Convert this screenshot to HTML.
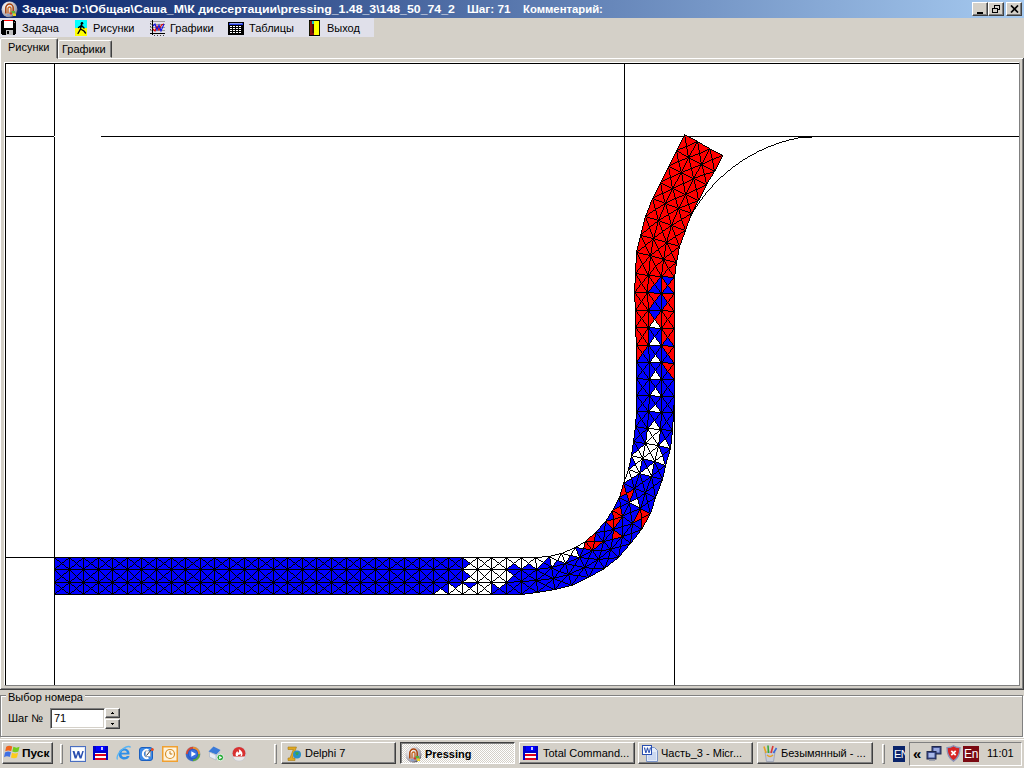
<!DOCTYPE html>
<html><head><meta charset="utf-8"><title>Pressing</title>
<style>
*{box-sizing:border-box;margin:0;padding:0}
html,body{width:1024px;height:768px;overflow:hidden;background:#d4d0c8}
body{position:relative;font-family:"Liberation Sans",sans-serif;font-size:11px;color:#000}
.abs{position:absolute}
.t{position:absolute;white-space:nowrap;line-height:13px}
#title{left:0;top:0;width:1024px;height:18px;background:linear-gradient(90deg,#0a246a 0%,#a6caf0 100%)}
#title .t{color:#fff;font-weight:bold;font-size:11px;top:3px}
.cb{position:absolute;top:2px;height:14px;width:16px;background:#d4d0c8;border:1px solid;border-color:#fff #404040 #404040 #fff;box-shadow:inset -1px -1px 0 #808080}
#toolbar{left:0;top:18px;width:374px;height:19px;background:#e0e0ea}
.tab{position:absolute;background:#d4d0c8;border:1px solid;border-color:#fff #404040 transparent #fff;border-radius:2px 2px 0 0}
.raised{border:1px solid;border-color:#fff #404040 #404040 #fff;box-shadow:inset -1px -1px 0 #808080,inset 1px 1px 0 #d4d0c8;background:#d4d0c8}
.tb{position:absolute;top:743px;height:22px;border:1px solid;border-color:#fff #404040 #404040 #fff;box-shadow:inset -1px -1px 0 #808080;background:#d4d0c8}
.tb .t{top:4px;font-size:11px}
.sep{position:absolute;top:745px;width:2px;height:18px;border-left:1px solid #808080;border-right:1px solid #fff}
</style></head><body>
<!-- title bar -->
<div id="title" class="abs">
 <svg class="abs" style="left:1px;top:1px" width="17" height="17" viewBox="0 0 17 17"><defs><radialGradient id="sg" cx="0.35" cy="0.3" r="0.75"><stop offset="0" stop-color="#ffffff"/><stop offset="0.45" stop-color="#d6d4d8"/><stop offset="0.85" stop-color="#9a98a4"/><stop offset="1" stop-color="#3a3a48"/></radialGradient></defs><circle cx="8.5" cy="8.5" r="8" fill="url(#sg)"/><path d="M4.8 12.5V6.800a3.700 3.700 0 0 1 7.400 0V12" fill="none" stroke="#a8420c" stroke-width="1.500"/><path d="M7 12.500V7.500a1.500 1.500 0 0 1 3 0V12" fill="none" stroke="#c8641c" stroke-width="1.300"/><rect x="10.500" y="10" width="3.500" height="2.500" fill="#58b038"/><rect x="12" y="12.500" width="3" height="2.500" fill="#e8d020"/><rect x="8.500" y="11.500" width="2.500" height="2" fill="#d03828"/><rect x="6" y="13" width="3" height="2" fill="#8aa0c8"/></svg>
 <div class="t" style="left:22px;transform-origin:0 0;transform:scaleX(1.118)">Задача: D:\Общая\Саша_М\К диссертации\pressing_1.48_3\148_50_74_2</div>
 <div class="t" style="left:467px;transform-origin:0 0;transform:scaleX(1.07)">Шаг: 71</div>
 <div class="t" style="left:523px;transform-origin:0 0;transform:scaleX(1.027)">Комментарий:</div>
 <div class="cb" style="left:972px"><div class="abs" style="left:4px;top:9px;width:6px;height:2px;background:#000"></div></div>
 <div class="cb" style="left:988px"><svg class="abs" style="left:2px;top:1px" width="10" height="10" viewBox="0 0 10 10" shape-rendering="crispEdges"><path d="M3.5 1.5h5v4h-2M3 1h6M3.5 1.5v2" fill="none" stroke="#000" stroke-width="1"/><path d="M1.5 4.5h5v4h-5zM1 4h6" fill="none" stroke="#000" stroke-width="1"/></svg></div>
 <div class="cb" style="left:1006px"><svg class="abs" style="left:3px;top:2px" width="9" height="8" viewBox="0 0 9 8"><path d="M1 0.5L8 7.5M8 0.5L1 7.5" stroke="#000" stroke-width="1.7"/></svg></div>
</div>
<!-- toolbar -->
<div id="toolbar" class="abs"></div>
<svg class="abs" style="left:1px;top:20px" width="16" height="16" viewBox="0 0 16 16" shape-rendering="crispEdges"><path d="M1 0h13v1h1v13h-1v1H1v-1H0V1h1z" fill="#000"/><rect x="3" y="0" width="9" height="1" fill="#f00"/><rect x="13" y="2" width="1" height="1" fill="#808080"/><rect x="3" y="1" width="9" height="7" fill="#fff"/><rect x="5" y="10" width="7" height="5" fill="#c0c0c0"/><rect x="6" y="11" width="2" height="3" fill="#000"/></svg>
<div class="t" style="left:22px;top:22px">Задача</div>
<svg class="abs" style="left:75px;top:20px" width="12" height="16" viewBox="0 0 12 16"><rect width="12" height="8" fill="#0ff"/><rect y="8" width="12" height="8" fill="#ff0"/><circle cx="7" cy="3.2" r="1.3" fill="#000"/><path d="M6.5 4.5L5.5 9 3 13.5M5.5 9L9 11l1.5 2M6.3 5.5L3.5 7.5M6.5 5.5L9 8" stroke="#000" stroke-width="1.4" fill="none" stroke-linecap="round"/></svg>
<div class="t" style="left:93px;top:22px">Рисунки</div>
<svg class="abs" style="left:149px;top:20px" width="17" height="17" viewBox="0 0 17 17"><g shape-rendering="crispEdges"><path d="M1 1.500h15M1 4.500h15M1 7.500h15M1 10.500h15" stroke="#9a9a9a" stroke-width="1" fill="none"/><path d="M3.500 0v15M1 13.500h15" stroke="#000" stroke-width="1" fill="none"/><path d="M5.500 15v1M8.500 15v1M11.500 15v1M14.500 15v1M1 3.500h1M1 6.500h1M1 9.500h1" stroke="#404040" stroke-width="1" fill="none"/></g><path d="M4 9l2 2 2-5 2 4 2.500-5 2.500-1" stroke="#e00000" fill="none" stroke-width="1.100"/><path d="M4 6l2-2 2 6 2-5 2 6 3-7" stroke="#1010e0" fill="none" stroke-width="1.100"/></svg>
<div class="t" style="left:170px;top:22px">Графики</div>
<svg class="abs" style="left:228px;top:22px" width="16" height="13" viewBox="0 0 16 13" shape-rendering="crispEdges"><rect width="16" height="13" fill="#000"/><rect x="1" y="1" width="14" height="2" fill="#2038e0"/><rect x="2" y="1" width="12" height="1" fill="#8898f0"/><rect x="2" y="4" width="2" height="1" fill="#fff"/><rect x="5" y="4" width="2" height="1" fill="#fff"/><rect x="8" y="4" width="2" height="1" fill="#fff"/><rect x="11" y="4" width="2" height="1" fill="#fff"/><rect x="2" y="6" width="2" height="1" fill="#fff"/><rect x="5" y="6" width="2" height="1" fill="#fff"/><rect x="8" y="6" width="2" height="1" fill="#fff"/><rect x="11" y="6" width="2" height="1" fill="#fff"/><rect x="2" y="8" width="2" height="1" fill="#fff"/><rect x="5" y="8" width="2" height="1" fill="#fff"/><rect x="8" y="8" width="2" height="1" fill="#fff"/><rect x="11" y="8" width="2" height="1" fill="#fff"/><rect x="2" y="10" width="2" height="1" fill="#fff"/><rect x="5" y="10" width="2" height="1" fill="#fff"/><rect x="8" y="10" width="2" height="1" fill="#fff"/><rect x="11" y="10" width="2" height="1" fill="#fff"/></svg>
<div class="t" style="left:249px;top:22px">Таблицы</div>
<svg class="abs" style="left:309px;top:20px" width="11" height="16" viewBox="0 0 12 16" preserveAspectRatio="none" shape-rendering="crispEdges"><rect x="0.5" y="0.5" width="11" height="15" fill="#ff0" stroke="#000"/><rect x="1" y="1" width="4" height="14" fill="#8a1010"/><rect x="3" y="1" width="2" height="3" fill="#20c0c0"/><path d="M4.5 4v9" stroke="#000" fill="none"/></svg>
<div class="t" style="left:327px;top:22px">Выход</div>
<!-- tabs -->
<div class="abs" style="left:0;top:58px;width:1023px;height:1px;background:#fff"></div>
<div class="tab" style="left:0px;top:38px;width:58px;height:21px;z-index:2;border-right-color:#404040;box-shadow:inset -1px 0 0 #808080"></div>
<div class="tab" style="left:58px;top:40px;width:54px;height:18px;box-shadow:inset -1px 0 0 #808080"></div>
<div class="t" style="left:8px;top:41px;z-index:3">Рисунки</div>
<div class="t" style="left:62px;top:43px;z-index:3">Графики</div>
<!-- tab page borders -->
<div class="abs" style="left:0;top:56px;width:1px;height:633px;background:#fff;z-index:4"></div>
<div class="abs" style="left:1022px;top:59px;width:1px;height:630px;background:#808080"></div>
<div class="abs" style="left:1023px;top:58px;width:1px;height:632px;background:#404040"></div>
<div class="abs" style="left:0;top:688px;width:1023px;height:1px;background:#808080"></div>
<div class="abs" style="left:0;top:689px;width:1024px;height:1px;background:#404040"></div>
<!-- canvas -->
<div class="abs" style="left:4px;top:62px;width:1016px;height:624px;background:#fff;border:1px solid;border-color:#fff #808080 #808080 #fff"></div>
<svg class="abs" style="left:0;top:0" width="1024" height="768" viewBox="0 0 1024 768" shape-rendering="crispEdges">
<rect x="5" y="63" width="1014" height="622" fill="#fff"/>
<rect x="5" y="63" width="1014" height="1" fill="#000"/><rect x="5" y="63" width="1" height="622" fill="#000"/>
<g stroke="#000" stroke-width="1" fill="none">
<path d="M54.5 64V136M54.5 137V685"/>
<path d="M6 136.5H54"/>
<path d="M101 136.5H1019"/>
<path d="M6 557.5H55"/>
<path d="M624.5 64V484"/>
<path d="M674.5 259V685"/>
</g>
<path fill="none" stroke="#000" stroke-width="1" d="M804 136.5h4m-10 1h14m-18 1h4m-9 1h5m-8 1h3m-7 1h4m-7 1h3m-6 1h3m-5 1h2m-5 1h3m-6 1h3m-5 1h2m-4 1h2m-4 1h2m-5 1h3m-5 1h2m-3 1h1m-3 1h2m-4 1h2m-4 1h2m-4 1h2m-3 1h1m-3 1h2m-4 1h2m-3 1h1m-3 1h2m-3 1h1m-2 1h1m-3 1h2m-3 1h1m-3 1h2m-3 1h1m-2 1h1m-2 1h1m-3 1h2m-3 1h1m-2 1h1m-2 1h1m-2 1h1m-2 1h1m-3 1h2m-3 1h1m-2 1h1m-2 1h1m-2 1h1m-2 1h1m-2 1h1m-2 1h1m-2 1h1m-2 1h1m-1 1h1m-2 1h1m-2 1h1m-2 1h1m-2 1h1m-2 1h1m-2 1h1m-2 1h1m-1 1h1m-2 1h1m-2 1h1m-2 1h1m-1 1h1m-2 1h1m-2 1h1m-2 1h1m-1 1h1m-2 1h1m-2 1h1m-1 1h1m-2 1h1m-2 1h1m-1 1h1m-2 1h1m-2 1h1m-1 1h1m-2 1h1m-1 1h1m-2 1h1m-1 1h1m-2 1h1m-2 1h1m-1 1h1m-2 1h1m-1 1h1m-2 1h1m-1 1h1m-2 1h1m-1 1h1m-2 1h1m-1 1h1m-2 1h1m-1 1h1m-1 1h1m-2 1h1m-1 1h1m-2 1h1m-1 1h1m-2 1h1m-1 1h1m-1 1h1m-2 1h1m-1 1h1m-1 1h1m-2 1h1m-1 1h1m-1 1h1m-2 1h1m-1 1h1m-1 1h1m-2 1h1m-1 1h1m-1 1h1m-2 1h1m-1 1h1m-1 1h1m-1 1h1m-2 1h1m-1 1h1m-1 1h1m-1 1h1m-2 1h1m-1 1h1m-1 1h1"/>
<g stroke="#000" stroke-width="1" stroke-linejoin="bevel">
<path fill="#0000ff" stroke="none" d="M54.5 557.5L69.5 557.5L61.5 563.5ZM54.5 569.5L69.5 569.5L61.5 563.5ZM54.5 557.5L54.5 569.5L61.5 563.5ZM69.5 557.5L69.5 569.5L61.5 563.5ZM54.5 569.5L69.5 569.5L61.5 576.5ZM54.5 582.5L69.5 582.5L61.5 576.5ZM54.5 569.5L54.5 582.5L61.5 576.5ZM69.5 569.5L69.5 582.5L61.5 576.5ZM54.5 582.5L69.5 582.5L61.5 588.5ZM54.5 594.5L69.5 594.5L61.5 588.5ZM54.5 582.5L54.5 594.5L61.5 588.5ZM69.5 582.5L69.5 594.5L61.5 588.5ZM69.5 557.5L83.5 557.5L76.5 563.5ZM69.5 569.5L83.5 569.5L76.5 563.5ZM69.5 557.5L69.5 569.5L76.5 563.5ZM83.5 557.5L83.5 569.5L76.5 563.5ZM69.5 569.5L83.5 569.5L76.5 576.5ZM69.5 582.5L83.5 582.5L76.5 576.5ZM69.5 569.5L69.5 582.5L76.5 576.5ZM83.5 569.5L83.5 582.5L76.5 576.5ZM69.5 582.5L83.5 582.5L76.5 588.5ZM69.5 594.5L83.5 594.5L76.5 588.5ZM69.5 582.5L69.5 594.5L76.5 588.5ZM83.5 582.5L83.5 594.5L76.5 588.5ZM83.5 557.5L98.5 557.5L90.5 563.5ZM83.5 569.5L98.5 569.5L90.5 563.5ZM83.5 557.5L83.5 569.5L90.5 563.5ZM98.5 557.5L98.5 569.5L90.5 563.5ZM83.5 569.5L98.5 569.5L90.5 576.5ZM83.5 582.5L98.5 582.5L90.5 576.5ZM83.5 569.5L83.5 582.5L90.5 576.5ZM98.5 569.5L98.5 582.5L90.5 576.5ZM83.5 582.5L98.5 582.5L90.5 588.5ZM83.5 594.5L98.5 594.5L90.5 588.5ZM83.5 582.5L83.5 594.5L90.5 588.5ZM98.5 582.5L98.5 594.5L90.5 588.5ZM98.5 557.5L112.5 557.5L105.5 563.5ZM98.5 569.5L112.5 569.5L105.5 563.5ZM98.5 557.5L98.5 569.5L105.5 563.5ZM112.5 557.5L112.5 569.5L105.5 563.5ZM98.5 569.5L112.5 569.5L105.5 576.5ZM98.5 582.5L112.5 582.5L105.5 576.5ZM98.5 569.5L98.5 582.5L105.5 576.5ZM112.5 569.5L112.5 582.5L105.5 576.5ZM98.5 582.5L112.5 582.5L105.5 588.5ZM98.5 594.5L112.5 594.5L105.5 588.5ZM98.5 582.5L98.5 594.5L105.5 588.5ZM112.5 582.5L112.5 594.5L105.5 588.5ZM112.5 557.5L127.5 557.5L120.5 563.5ZM112.5 569.5L127.5 569.5L120.5 563.5ZM112.5 557.5L112.5 569.5L120.5 563.5ZM127.5 557.5L127.5 569.5L120.5 563.5ZM112.5 569.5L127.5 569.5L120.5 576.5ZM112.5 582.5L127.5 582.5L120.5 576.5ZM112.5 569.5L112.5 582.5L120.5 576.5ZM127.5 569.5L127.5 582.5L120.5 576.5ZM112.5 582.5L127.5 582.5L120.5 588.5ZM112.5 594.5L127.5 594.5L120.5 588.5ZM112.5 582.5L112.5 594.5L120.5 588.5ZM127.5 582.5L127.5 594.5L120.5 588.5ZM127.5 557.5L141.5 557.5L134.5 563.5ZM127.5 569.5L141.5 569.5L134.5 563.5ZM127.5 557.5L127.5 569.5L134.5 563.5ZM141.5 557.5L141.5 569.5L134.5 563.5ZM127.5 569.5L141.5 569.5L134.5 576.5ZM127.5 582.5L141.5 582.5L134.5 576.5ZM127.5 569.5L127.5 582.5L134.5 576.5ZM141.5 569.5L141.5 582.5L134.5 576.5ZM127.5 582.5L141.5 582.5L134.5 588.5ZM127.5 594.5L141.5 594.5L134.5 588.5ZM127.5 582.5L127.5 594.5L134.5 588.5ZM141.5 582.5L141.5 594.5L134.5 588.5ZM141.5 557.5L156.5 557.5L149.5 563.5ZM141.5 569.5L156.5 569.5L149.5 563.5ZM141.5 557.5L141.5 569.5L149.5 563.5ZM156.5 557.5L156.5 569.5L149.5 563.5ZM141.5 569.5L156.5 569.5L149.5 576.5ZM141.5 582.5L156.5 582.5L149.5 576.5ZM141.5 569.5L141.5 582.5L149.5 576.5ZM156.5 569.5L156.5 582.5L149.5 576.5ZM141.5 582.5L156.5 582.5L149.5 588.5ZM141.5 594.5L156.5 594.5L149.5 588.5ZM141.5 582.5L141.5 594.5L149.5 588.5ZM156.5 582.5L156.5 594.5L149.5 588.5ZM156.5 557.5L171.5 557.5L163.5 563.5ZM156.5 569.5L171.5 569.5L163.5 563.5ZM156.5 557.5L156.5 569.5L163.5 563.5ZM171.5 557.5L171.5 569.5L163.5 563.5ZM156.5 569.5L171.5 569.5L163.5 576.5ZM156.5 582.5L171.5 582.5L163.5 576.5ZM156.5 569.5L156.5 582.5L163.5 576.5ZM171.5 569.5L171.5 582.5L163.5 576.5ZM156.5 582.5L171.5 582.5L163.5 588.5ZM156.5 594.5L171.5 594.5L163.5 588.5ZM156.5 582.5L156.5 594.5L163.5 588.5ZM171.5 582.5L171.5 594.5L163.5 588.5ZM171.5 557.5L185.5 557.5L178.5 563.5ZM171.5 569.5L185.5 569.5L178.5 563.5ZM171.5 557.5L171.5 569.5L178.5 563.5ZM185.5 557.5L185.5 569.5L178.5 563.5ZM171.5 569.5L185.5 569.5L178.5 576.5ZM171.5 582.5L185.5 582.5L178.5 576.5ZM171.5 569.5L171.5 582.5L178.5 576.5ZM185.5 569.5L185.5 582.5L178.5 576.5ZM171.5 582.5L185.5 582.5L178.5 588.5ZM171.5 594.5L185.5 594.5L178.5 588.5ZM171.5 582.5L171.5 594.5L178.5 588.5ZM185.5 582.5L185.5 594.5L178.5 588.5ZM185.5 557.5L200.5 557.5L193.5 563.5ZM185.5 569.5L200.5 569.5L193.5 563.5ZM185.5 557.5L185.5 569.5L193.5 563.5ZM200.5 557.5L200.5 569.5L193.5 563.5ZM185.5 569.5L200.5 569.5L193.5 576.5ZM185.5 582.5L200.5 582.5L193.5 576.5ZM185.5 569.5L185.5 582.5L193.5 576.5ZM200.5 569.5L200.5 582.5L193.5 576.5ZM185.5 582.5L200.5 582.5L193.5 588.5ZM185.5 594.5L200.5 594.5L193.5 588.5ZM185.5 582.5L185.5 594.5L193.5 588.5ZM200.5 582.5L200.5 594.5L193.5 588.5ZM200.5 557.5L214.5 557.5L207.5 563.5ZM200.5 569.5L214.5 569.5L207.5 563.5ZM200.5 557.5L200.5 569.5L207.5 563.5ZM214.5 557.5L214.5 569.5L207.5 563.5ZM200.5 569.5L214.5 569.5L207.5 576.5ZM200.5 582.5L214.5 582.5L207.5 576.5ZM200.5 569.5L200.5 582.5L207.5 576.5ZM214.5 569.5L214.5 582.5L207.5 576.5ZM200.5 582.5L214.5 582.5L207.5 588.5ZM200.5 594.5L214.5 594.5L207.5 588.5ZM200.5 582.5L200.5 594.5L207.5 588.5ZM214.5 582.5L214.5 594.5L207.5 588.5ZM214.5 557.5L229.5 557.5L222.5 563.5ZM214.5 569.5L229.5 569.5L222.5 563.5ZM214.5 557.5L214.5 569.5L222.5 563.5ZM229.5 557.5L229.5 569.5L222.5 563.5ZM214.5 569.5L229.5 569.5L222.5 576.5ZM214.5 582.5L229.5 582.5L222.5 576.5ZM214.5 569.5L214.5 582.5L222.5 576.5ZM229.5 569.5L229.5 582.5L222.5 576.5ZM214.5 582.5L229.5 582.5L222.5 588.5ZM214.5 594.5L229.5 594.5L222.5 588.5ZM214.5 582.5L214.5 594.5L222.5 588.5ZM229.5 582.5L229.5 594.5L222.5 588.5ZM229.5 557.5L244.5 557.5L236.5 563.5ZM229.5 569.5L244.5 569.5L236.5 563.5ZM229.5 557.5L229.5 569.5L236.5 563.5ZM244.5 557.5L244.5 569.5L236.5 563.5ZM229.5 569.5L244.5 569.5L236.5 576.5ZM229.5 582.5L244.5 582.5L236.5 576.5ZM229.5 569.5L229.5 582.5L236.5 576.5ZM244.5 569.5L244.5 582.5L236.5 576.5ZM229.5 582.5L244.5 582.5L236.5 588.5ZM229.5 594.5L244.5 594.5L236.5 588.5ZM229.5 582.5L229.5 594.5L236.5 588.5ZM244.5 582.5L244.5 594.5L236.5 588.5ZM244.5 557.5L258.5 557.5L251.5 563.5ZM244.5 569.5L258.5 569.5L251.5 563.5ZM244.5 557.5L244.5 569.5L251.5 563.5ZM258.5 557.5L258.5 569.5L251.5 563.5ZM244.5 569.5L258.5 569.5L251.5 576.5ZM244.5 582.5L258.5 582.5L251.5 576.5ZM244.5 569.5L244.5 582.5L251.5 576.5ZM258.5 569.5L258.5 582.5L251.5 576.5ZM244.5 582.5L258.5 582.5L251.5 588.5ZM244.5 594.5L258.5 594.5L251.5 588.5ZM244.5 582.5L244.5 594.5L251.5 588.5ZM258.5 582.5L258.5 594.5L251.5 588.5ZM258.5 557.5L273.5 557.5L265.5 563.5ZM258.5 569.5L273.5 569.5L265.5 563.5ZM258.5 557.5L258.5 569.5L265.5 563.5ZM273.5 557.5L273.5 569.5L265.5 563.5ZM258.5 569.5L273.5 569.5L265.5 576.5ZM258.5 582.5L273.5 582.5L265.5 576.5ZM258.5 569.5L258.5 582.5L265.5 576.5ZM273.5 569.5L273.5 582.5L265.5 576.5ZM258.5 582.5L273.5 582.5L265.5 588.5ZM258.5 594.5L273.5 594.5L265.5 588.5ZM258.5 582.5L258.5 594.5L265.5 588.5ZM273.5 582.5L273.5 594.5L265.5 588.5ZM273.5 557.5L287.5 557.5L280.5 563.5ZM273.5 569.5L287.5 569.5L280.5 563.5ZM273.5 557.5L273.5 569.5L280.5 563.5ZM287.5 557.5L287.5 569.5L280.5 563.5ZM273.5 569.5L287.5 569.5L280.5 576.5ZM273.5 582.5L287.5 582.5L280.5 576.5ZM273.5 569.5L273.5 582.5L280.5 576.5ZM287.5 569.5L287.5 582.5L280.5 576.5ZM273.5 582.5L287.5 582.5L280.5 588.5ZM273.5 594.5L287.5 594.5L280.5 588.5ZM273.5 582.5L273.5 594.5L280.5 588.5ZM287.5 582.5L287.5 594.5L280.5 588.5ZM287.5 557.5L302.5 557.5L295.5 563.5ZM287.5 569.5L302.5 569.5L295.5 563.5ZM287.5 557.5L287.5 569.5L295.5 563.5ZM302.5 557.5L302.5 569.5L295.5 563.5ZM287.5 569.5L302.5 569.5L295.5 576.5ZM287.5 582.5L302.5 582.5L295.5 576.5ZM287.5 569.5L287.5 582.5L295.5 576.5ZM302.5 569.5L302.5 582.5L295.5 576.5ZM287.5 582.5L302.5 582.5L295.5 588.5ZM287.5 594.5L302.5 594.5L295.5 588.5ZM287.5 582.5L287.5 594.5L295.5 588.5ZM302.5 582.5L302.5 594.5L295.5 588.5ZM302.5 557.5L316.5 557.5L309.5 563.5ZM302.5 569.5L316.5 569.5L309.5 563.5ZM302.5 557.5L302.5 569.5L309.5 563.5ZM316.5 557.5L316.5 569.5L309.5 563.5ZM302.5 569.5L316.5 569.5L309.5 576.5ZM302.5 582.5L316.5 582.5L309.5 576.5ZM302.5 569.5L302.5 582.5L309.5 576.5ZM316.5 569.5L316.5 582.5L309.5 576.5ZM302.5 582.5L316.5 582.5L309.5 588.5ZM302.5 594.5L316.5 594.5L309.5 588.5ZM302.5 582.5L302.5 594.5L309.5 588.5ZM316.5 582.5L316.5 594.5L309.5 588.5ZM316.5 557.5L331.5 557.5L324.5 563.5ZM316.5 569.5L331.5 569.5L324.5 563.5ZM316.5 557.5L316.5 569.5L324.5 563.5ZM331.5 557.5L331.5 569.5L324.5 563.5ZM316.5 569.5L331.5 569.5L324.5 576.5ZM316.5 582.5L331.5 582.5L324.5 576.5ZM316.5 569.5L316.5 582.5L324.5 576.5ZM331.5 569.5L331.5 582.5L324.5 576.5ZM316.5 582.5L331.5 582.5L324.5 588.5ZM316.5 594.5L331.5 594.5L324.5 588.5ZM316.5 582.5L316.5 594.5L324.5 588.5ZM331.5 582.5L331.5 594.5L324.5 588.5ZM331.5 557.5L346.5 557.5L338.5 563.5ZM331.5 569.5L346.5 569.5L338.5 563.5ZM331.5 557.5L331.5 569.5L338.5 563.5ZM346.5 557.5L346.5 569.5L338.5 563.5ZM331.5 569.5L346.5 569.5L338.5 576.5ZM331.5 582.5L346.5 582.5L338.5 576.5ZM331.5 569.5L331.5 582.5L338.5 576.5ZM346.5 569.5L346.5 582.5L338.5 576.5ZM331.5 582.5L346.5 582.5L338.5 588.5ZM331.5 594.5L346.5 594.5L338.5 588.5ZM331.5 582.5L331.5 594.5L338.5 588.5ZM346.5 582.5L346.5 594.5L338.5 588.5ZM346.5 557.5L360.5 557.5L353.5 563.5ZM346.5 569.5L360.5 569.5L353.5 563.5ZM346.5 557.5L346.5 569.5L353.5 563.5ZM360.5 557.5L360.5 569.5L353.5 563.5ZM346.5 569.5L360.5 569.5L353.5 576.5ZM346.5 582.5L360.5 582.5L353.5 576.5ZM346.5 569.5L346.5 582.5L353.5 576.5ZM360.5 569.5L360.5 582.5L353.5 576.5ZM346.5 582.5L360.5 582.5L353.5 588.5ZM346.5 594.5L360.5 594.5L353.5 588.5ZM346.5 582.5L346.5 594.5L353.5 588.5ZM360.5 582.5L360.5 594.5L353.5 588.5ZM360.5 557.5L375.5 557.5L367.5 563.5ZM360.5 569.5L375.5 569.5L367.5 563.5ZM360.5 557.5L360.5 569.5L367.5 563.5ZM375.5 557.5L375.5 569.5L367.5 563.5ZM360.5 569.5L375.5 569.5L367.5 576.5ZM360.5 582.5L375.5 582.5L367.5 576.5ZM360.5 569.5L360.5 582.5L367.5 576.5ZM375.5 569.5L375.5 582.5L367.5 576.5ZM360.5 582.5L375.5 582.5L367.5 588.5ZM360.5 594.5L375.5 594.5L367.5 588.5ZM360.5 582.5L360.5 594.5L367.5 588.5ZM375.5 582.5L375.5 594.5L367.5 588.5ZM375.5 557.5L389.5 557.5L382.5 563.5ZM375.5 569.5L389.5 569.5L382.5 563.5ZM375.5 557.5L375.5 569.5L382.5 563.5ZM389.5 557.5L389.5 569.5L382.5 563.5ZM375.5 569.5L389.5 569.5L382.5 576.5ZM375.5 582.5L389.5 582.5L382.5 576.5ZM375.5 569.5L375.5 582.5L382.5 576.5ZM389.5 569.5L389.5 582.5L382.5 576.5ZM375.5 582.5L389.5 582.5L382.5 588.5ZM375.5 594.5L389.5 594.5L382.5 588.5ZM375.5 582.5L375.5 594.5L382.5 588.5ZM389.5 582.5L389.5 594.5L382.5 588.5ZM389.5 557.5L404.5 557.5L397.5 563.5ZM389.5 569.5L404.5 569.5L397.5 563.5ZM389.5 557.5L389.5 569.5L397.5 563.5ZM404.5 557.5L404.5 569.5L397.5 563.5ZM389.5 569.5L404.5 569.5L397.5 576.5ZM389.5 582.5L404.5 582.5L397.5 576.5ZM389.5 569.5L389.5 582.5L397.5 576.5ZM404.5 569.5L404.5 582.5L397.5 576.5ZM389.5 582.5L404.5 582.5L397.5 588.5ZM389.5 594.5L404.5 594.5L397.5 588.5ZM389.5 582.5L389.5 594.5L397.5 588.5ZM404.5 582.5L404.5 594.5L397.5 588.5ZM404.5 557.5L419.5 557.5L411.5 563.5ZM404.5 569.5L419.5 569.5L411.5 563.5ZM404.5 557.5L404.5 569.5L411.5 563.5ZM419.5 557.5L419.5 569.5L411.5 563.5ZM404.5 569.5L419.5 569.5L411.5 576.5ZM404.5 582.5L419.5 582.5L411.5 576.5ZM404.5 569.5L404.5 582.5L411.5 576.5ZM419.5 569.5L419.5 582.5L411.5 576.5ZM404.5 582.5L419.5 582.5L411.5 588.5ZM404.5 594.5L419.5 594.5L411.5 588.5ZM404.5 582.5L404.5 594.5L411.5 588.5ZM419.5 582.5L419.5 594.5L411.5 588.5ZM419.5 557.5L433.5 557.5L426.5 563.5ZM419.5 569.5L433.5 569.5L426.5 563.5ZM419.5 557.5L419.5 569.5L426.5 563.5ZM433.5 557.5L433.5 569.5L426.5 563.5ZM419.5 569.5L433.5 569.5L426.5 576.5ZM419.5 582.5L433.5 582.5L426.5 576.5ZM419.5 569.5L419.5 582.5L426.5 576.5ZM433.5 569.5L433.5 582.5L426.5 576.5ZM419.5 582.5L433.5 582.5L426.5 588.5ZM419.5 594.5L433.5 594.5L426.5 588.5ZM419.5 582.5L419.5 594.5L426.5 588.5ZM433.5 582.5L433.5 594.5L426.5 588.5ZM433.5 557.5L448.5 557.5L440.5 563.5ZM433.5 569.5L448.5 569.5L440.5 563.5ZM433.5 557.5L433.5 569.5L440.5 563.5ZM448.5 557.5L448.5 569.5L440.5 563.5ZM433.5 569.5L448.5 569.5L440.5 576.5ZM433.5 582.5L448.5 582.5L440.5 576.5ZM433.5 569.5L433.5 582.5L440.5 576.5ZM448.5 569.5L448.5 582.5L440.5 576.5ZM433.5 582.5L448.5 582.5L440.5 588.5ZM433.5 582.5L433.5 594.5L440.5 588.5ZM448.5 582.5L448.5 594.5L440.5 588.5ZM448.5 557.5L462.5 557.5L455.5 563.5ZM448.5 569.5L462.5 569.5L455.5 563.5ZM448.5 557.5L448.5 569.5L455.5 563.5ZM462.5 557.5L462.5 569.5L455.5 563.5ZM448.5 569.5L462.5 569.5L455.5 576.5ZM448.5 582.5L462.5 582.5L455.5 576.5ZM448.5 569.5L448.5 582.5L455.5 576.5ZM462.5 569.5L462.5 582.5L455.5 576.5ZM448.5 582.5L462.5 582.5L455.5 588.5ZM462.5 557.5L462.5 569.5L470.5 563.5ZM462.5 569.5L462.5 582.5L470.5 576.5ZM462.5 582.5L477.5 582.5L470.5 588.5ZM491.5 594.5L506.5 594.5L499.5 588.5ZM491.5 582.5L491.5 594.5L499.5 588.5ZM506.5 582.5L506.5 594.5L499.5 588.5ZM506.5 569.5L521.5 569.5L513.5 563.5ZM506.5 569.5L521.5 569.5L513.5 575.5ZM506.5 582.5L521.5 581.5L513.5 575.5ZM521.5 569.5L521.5 581.5L513.5 575.5ZM506.5 582.5L521.5 581.5L513.5 588.5ZM506.5 594.5L521.5 594.5L513.5 588.5ZM506.5 582.5L506.5 594.5L513.5 588.5ZM521.5 581.5L521.5 594.5L513.5 588.5ZM521.5 569.5L536.5 569.5L528.5 563.5ZM521.5 569.5L536.5 569.5L528.5 575.5ZM521.5 581.5L536.5 580.5L528.5 575.5ZM521.5 569.5L521.5 581.5L528.5 575.5ZM536.5 569.5L536.5 580.5L528.5 575.5ZM521.5 581.5L536.5 580.5L529.5 587.5ZM521.5 594.5L537.5 592.5L529.5 587.5ZM521.5 581.5L521.5 594.5L529.5 587.5ZM536.5 580.5L537.5 592.5L529.5 587.5ZM536.5 569.5L551.5 567.5L543.5 562.5ZM549.5 556.5L551.5 567.5L543.5 562.5ZM536.5 569.5L551.5 567.5L544.5 574.5ZM536.5 580.5L553.5 578.5L544.5 574.5ZM536.5 569.5L536.5 580.5L544.5 574.5ZM551.5 567.5L553.5 578.5L544.5 574.5ZM536.5 580.5L553.5 578.5L545.5 585.5ZM537.5 592.5L554.5 589.5L545.5 585.5ZM536.5 580.5L537.5 592.5L545.5 585.5ZM553.5 578.5L554.5 589.5L545.5 585.5ZM551.5 567.5L565.5 563.5L557.5 560.5ZM551.5 567.5L565.5 563.5L559.5 571.5ZM553.5 578.5L568.5 574.5L559.5 571.5ZM551.5 567.5L553.5 578.5L559.5 571.5ZM565.5 563.5L568.5 574.5L559.5 571.5ZM553.5 578.5L568.5 574.5L561.5 581.5ZM554.5 589.5L571.5 585.5L561.5 581.5ZM553.5 578.5L554.5 589.5L561.5 581.5ZM568.5 574.5L571.5 585.5L561.5 581.5ZM565.5 563.5L579.5 557.5L570.5 555.5ZM565.5 563.5L579.5 557.5L574.5 565.5ZM568.5 574.5L584.5 567.5L574.5 565.5ZM565.5 563.5L568.5 574.5L574.5 565.5ZM579.5 557.5L584.5 567.5L574.5 565.5ZM568.5 574.5L584.5 567.5L578.5 575.5ZM571.5 585.5L588.5 577.5L578.5 575.5ZM568.5 574.5L571.5 585.5L578.5 575.5ZM584.5 567.5L588.5 577.5L578.5 575.5ZM579.5 557.5L592.5 550.5L583.5 548.5ZM575.5 547.5L579.5 557.5L583.5 548.5ZM579.5 557.5L592.5 550.5L588.5 558.5ZM584.5 567.5L598.5 559.5L588.5 558.5ZM579.5 557.5L584.5 567.5L588.5 558.5ZM592.5 550.5L598.5 559.5L588.5 558.5ZM584.5 567.5L598.5 559.5L593.5 568.5ZM588.5 577.5L604.5 568.5L593.5 568.5ZM584.5 567.5L588.5 577.5L593.5 568.5ZM598.5 559.5L604.5 568.5L593.5 568.5ZM595.5 532.5L603.5 541.5L594.5 541.5ZM592.5 550.5L603.5 541.5L601.5 550.5ZM598.5 559.5L610.5 549.5L601.5 550.5ZM592.5 550.5L598.5 559.5L601.5 550.5ZM603.5 541.5L610.5 549.5L601.5 550.5ZM598.5 559.5L610.5 549.5L608.5 558.5ZM604.5 568.5L618.5 557.5L608.5 558.5ZM598.5 559.5L604.5 568.5L608.5 558.5ZM610.5 549.5L618.5 557.5L608.5 558.5ZM595.5 532.5L605.5 521.5L604.5 531.5ZM603.5 541.5L613.5 529.5L604.5 531.5ZM595.5 532.5L603.5 541.5L604.5 531.5ZM605.5 521.5L613.5 529.5L604.5 531.5ZM603.5 541.5L613.5 529.5L612.5 539.5ZM610.5 549.5L622.5 536.5L612.5 539.5ZM603.5 541.5L610.5 549.5L612.5 539.5ZM610.5 549.5L622.5 536.5L620.5 546.5ZM618.5 557.5L630.5 543.5L620.5 546.5ZM610.5 549.5L618.5 557.5L620.5 546.5ZM622.5 536.5L630.5 543.5L620.5 546.5ZM605.5 521.5L612.5 510.5L613.5 519.5ZM613.5 529.5L622.5 516.5L622.5 526.5ZM622.5 536.5L632.5 523.5L622.5 526.5ZM613.5 529.5L622.5 536.5L622.5 526.5ZM622.5 516.5L632.5 523.5L622.5 526.5ZM622.5 536.5L632.5 523.5L631.5 533.5ZM630.5 543.5L641.5 529.5L631.5 533.5ZM622.5 536.5L630.5 543.5L631.5 533.5ZM632.5 523.5L641.5 529.5L631.5 533.5ZM612.5 510.5L619.5 497.5L620.5 506.5ZM622.5 516.5L629.5 502.5L620.5 506.5ZM619.5 497.5L629.5 502.5L620.5 506.5ZM622.5 516.5L629.5 502.5L630.5 512.5ZM632.5 523.5L640.5 508.5L630.5 512.5ZM622.5 516.5L632.5 523.5L630.5 512.5ZM629.5 502.5L640.5 508.5L630.5 512.5ZM632.5 523.5L641.5 529.5L641.5 518.5ZM619.5 497.5L629.5 502.5L626.5 493.5ZM623.5 483.5L634.5 488.5L626.5 493.5ZM629.5 502.5L634.5 488.5L637.5 498.5ZM640.5 508.5L645.5 492.5L637.5 498.5ZM634.5 488.5L645.5 492.5L637.5 498.5ZM640.5 508.5L645.5 492.5L647.5 502.5ZM650.5 513.5L655.5 497.5L647.5 502.5ZM640.5 508.5L650.5 513.5L647.5 502.5ZM645.5 492.5L655.5 497.5L647.5 502.5ZM634.5 488.5L639.5 473.5L631.5 478.5ZM623.5 483.5L634.5 488.5L631.5 478.5ZM634.5 488.5L639.5 473.5L642.5 482.5ZM645.5 492.5L651.5 476.5L642.5 482.5ZM634.5 488.5L645.5 492.5L642.5 482.5ZM639.5 473.5L651.5 476.5L642.5 482.5ZM645.5 492.5L651.5 476.5L653.5 486.5ZM655.5 497.5L662.5 479.5L653.5 486.5ZM645.5 492.5L655.5 497.5L653.5 486.5ZM651.5 476.5L662.5 479.5L653.5 486.5ZM628.5 469.5L631.5 455.5L635.5 464.5ZM639.5 473.5L642.5 458.5L647.5 467.5ZM642.5 458.5L654.5 461.5L647.5 467.5ZM651.5 476.5L654.5 461.5L658.5 470.5ZM662.5 479.5L665.5 465.5L658.5 470.5ZM651.5 476.5L662.5 479.5L658.5 470.5ZM654.5 461.5L665.5 465.5L658.5 470.5ZM631.5 455.5L633.5 441.5L638.5 449.5ZM633.5 441.5L645.5 443.5L638.5 449.5ZM665.5 465.5L670.5 448.5L662.5 455.5ZM658.5 445.5L670.5 448.5L662.5 455.5ZM633.5 441.5L635.5 426.5L640.5 434.5ZM645.5 443.5L647.5 428.5L640.5 434.5ZM633.5 441.5L645.5 443.5L640.5 434.5ZM635.5 426.5L647.5 428.5L640.5 434.5ZM658.5 445.5L660.5 429.5L665.5 438.5ZM670.5 448.5L672.5 430.5L665.5 438.5ZM660.5 429.5L672.5 430.5L665.5 438.5ZM635.5 426.5L636.5 411.5L641.5 419.5ZM647.5 428.5L648.5 411.5L641.5 419.5ZM635.5 426.5L647.5 428.5L641.5 419.5ZM636.5 411.5L648.5 411.5L641.5 419.5ZM647.5 428.5L648.5 411.5L654.5 420.5ZM660.5 429.5L661.5 412.5L654.5 420.5ZM648.5 411.5L661.5 412.5L654.5 420.5ZM660.5 429.5L661.5 412.5L666.5 421.5ZM672.5 430.5L673.5 412.5L666.5 421.5ZM660.5 429.5L672.5 430.5L666.5 421.5ZM661.5 412.5L673.5 412.5L666.5 421.5ZM636.5 411.5L636.5 395.5L642.5 403.5ZM648.5 411.5L649.5 395.5L642.5 403.5ZM636.5 411.5L648.5 411.5L642.5 403.5ZM636.5 395.5L649.5 395.5L642.5 403.5ZM648.5 411.5L649.5 395.5L655.5 404.5ZM661.5 412.5L661.5 396.5L655.5 404.5ZM649.5 395.5L661.5 396.5L655.5 404.5ZM661.5 412.5L661.5 396.5L667.5 404.5ZM673.5 412.5L674.5 396.5L667.5 404.5ZM661.5 412.5L673.5 412.5L667.5 404.5ZM661.5 396.5L674.5 396.5L667.5 404.5ZM636.5 395.5L636.5 378.5L642.5 387.5ZM649.5 395.5L649.5 379.5L642.5 387.5ZM636.5 395.5L649.5 395.5L642.5 387.5ZM636.5 378.5L649.5 379.5L642.5 387.5ZM649.5 395.5L649.5 379.5L655.5 387.5ZM661.5 396.5L661.5 379.5L655.5 387.5ZM649.5 379.5L661.5 379.5L655.5 387.5ZM661.5 396.5L661.5 379.5L667.5 387.5ZM674.5 396.5L674.5 379.5L667.5 387.5ZM661.5 396.5L674.5 396.5L667.5 387.5ZM661.5 379.5L674.5 379.5L667.5 387.5ZM636.5 378.5L636.5 362.5L642.5 370.5ZM649.5 379.5L649.5 362.5L642.5 370.5ZM636.5 378.5L649.5 379.5L642.5 370.5ZM636.5 362.5L649.5 362.5L642.5 370.5ZM649.5 379.5L649.5 362.5L655.5 370.5ZM661.5 379.5L661.5 362.5L655.5 370.5ZM649.5 362.5L661.5 362.5L655.5 370.5ZM661.5 379.5L661.5 362.5L667.5 371.5ZM661.5 379.5L674.5 379.5L667.5 371.5ZM649.5 362.5L648.5 345.5L642.5 353.5ZM636.5 362.5L649.5 362.5L642.5 353.5ZM649.5 362.5L648.5 345.5L655.5 354.5ZM661.5 362.5L661.5 345.5L655.5 354.5ZM648.5 345.5L661.5 345.5L655.5 354.5ZM661.5 362.5L661.5 345.5L667.5 354.5ZM661.5 362.5L674.5 363.5L667.5 354.5ZM648.5 345.5L648.5 327.5L654.5 336.5ZM661.5 345.5L661.5 328.5L654.5 336.5ZM648.5 327.5L661.5 328.5L654.5 336.5ZM661.5 345.5L674.5 346.5L667.5 337.5ZM648.5 310.5L661.5 310.5L654.5 319.5ZM661.5 310.5L661.5 293.5L654.5 301.5ZM648.5 310.5L661.5 310.5L654.5 301.5ZM661.5 310.5L661.5 293.5L667.5 302.5ZM661.5 293.5L661.5 276.5L654.5 284.5ZM647.5 292.5L661.5 293.5L654.5 284.5ZM661.5 293.5L674.5 293.5L667.5 285.5ZM661.5 276.5L674.5 277.5L667.5 285.5Z"/>
<path fill="#ff0000" stroke="none" d="M585.5 541.5L592.5 550.5L583.5 548.5ZM585.5 541.5L595.5 532.5L594.5 541.5ZM592.5 550.5L603.5 541.5L594.5 541.5ZM585.5 541.5L592.5 550.5L594.5 541.5ZM613.5 529.5L622.5 536.5L612.5 539.5ZM613.5 529.5L622.5 516.5L613.5 519.5ZM605.5 521.5L613.5 529.5L613.5 519.5ZM612.5 510.5L622.5 516.5L613.5 519.5ZM612.5 510.5L622.5 516.5L620.5 506.5ZM632.5 523.5L640.5 508.5L641.5 518.5ZM641.5 529.5L650.5 513.5L641.5 518.5ZM640.5 508.5L650.5 513.5L641.5 518.5ZM619.5 497.5L623.5 483.5L626.5 493.5ZM629.5 502.5L634.5 488.5L626.5 493.5ZM674.5 379.5L674.5 363.5L667.5 371.5ZM661.5 362.5L674.5 363.5L667.5 371.5ZM636.5 362.5L636.5 345.5L642.5 353.5ZM636.5 345.5L648.5 345.5L642.5 353.5ZM674.5 363.5L674.5 346.5L667.5 354.5ZM661.5 345.5L674.5 346.5L667.5 354.5ZM636.5 345.5L635.5 327.5L642.5 336.5ZM648.5 345.5L648.5 327.5L642.5 336.5ZM636.5 345.5L648.5 345.5L642.5 336.5ZM635.5 327.5L648.5 327.5L642.5 336.5ZM661.5 345.5L661.5 328.5L667.5 337.5ZM674.5 346.5L674.5 328.5L667.5 337.5ZM661.5 328.5L674.5 328.5L667.5 337.5ZM635.5 327.5L635.5 310.5L641.5 318.5ZM648.5 327.5L648.5 310.5L641.5 318.5ZM635.5 327.5L648.5 327.5L641.5 318.5ZM635.5 310.5L648.5 310.5L641.5 318.5ZM648.5 327.5L648.5 310.5L654.5 319.5ZM661.5 328.5L661.5 310.5L654.5 319.5ZM661.5 328.5L661.5 310.5L667.5 319.5ZM674.5 328.5L674.5 311.5L667.5 319.5ZM661.5 328.5L674.5 328.5L667.5 319.5ZM661.5 310.5L674.5 311.5L667.5 319.5ZM635.5 310.5L634.5 292.5L641.5 301.5ZM648.5 310.5L647.5 292.5L641.5 301.5ZM635.5 310.5L648.5 310.5L641.5 301.5ZM634.5 292.5L647.5 292.5L641.5 301.5ZM648.5 310.5L647.5 292.5L654.5 301.5ZM647.5 292.5L661.5 293.5L654.5 301.5ZM674.5 311.5L674.5 293.5L667.5 302.5ZM661.5 310.5L674.5 311.5L667.5 302.5ZM661.5 293.5L674.5 293.5L667.5 302.5ZM634.5 292.5L635.5 273.5L641.5 283.5ZM647.5 292.5L648.5 275.5L641.5 283.5ZM634.5 292.5L647.5 292.5L641.5 283.5ZM635.5 273.5L648.5 275.5L641.5 283.5ZM647.5 292.5L648.5 275.5L654.5 284.5ZM648.5 275.5L661.5 276.5L654.5 284.5ZM661.5 293.5L661.5 276.5L667.5 285.5ZM674.5 293.5L674.5 277.5L667.5 285.5ZM635.5 273.5L636.5 252.5L642.5 264.5ZM648.5 275.5L650.5 255.5L642.5 264.5ZM635.5 273.5L648.5 275.5L642.5 264.5ZM636.5 252.5L650.5 255.5L642.5 264.5ZM648.5 275.5L650.5 255.5L655.5 266.5ZM661.5 276.5L663.5 259.5L655.5 266.5ZM648.5 275.5L661.5 276.5L655.5 266.5ZM650.5 255.5L663.5 259.5L655.5 266.5ZM661.5 276.5L663.5 259.5L668.5 268.5ZM674.5 277.5L676.5 262.5L668.5 268.5ZM661.5 276.5L674.5 277.5L668.5 268.5ZM663.5 259.5L676.5 262.5L668.5 268.5ZM636.5 252.5L640.5 235.5L645.5 245.5ZM650.5 255.5L653.5 238.5L645.5 245.5ZM636.5 252.5L650.5 255.5L645.5 245.5ZM640.5 235.5L653.5 238.5L645.5 245.5ZM650.5 255.5L653.5 238.5L658.5 249.5ZM663.5 259.5L666.5 242.5L658.5 249.5ZM650.5 255.5L663.5 259.5L658.5 249.5ZM653.5 238.5L666.5 242.5L658.5 249.5ZM663.5 259.5L666.5 242.5L671.5 252.5ZM676.5 262.5L679.5 246.5L671.5 252.5ZM663.5 259.5L676.5 262.5L671.5 252.5ZM666.5 242.5L679.5 246.5L671.5 252.5ZM640.5 235.5L645.5 216.5L649.5 227.5ZM653.5 238.5L658.5 220.5L649.5 227.5ZM640.5 235.5L653.5 238.5L649.5 227.5ZM645.5 216.5L658.5 220.5L649.5 227.5ZM653.5 238.5L658.5 220.5L662.5 231.5ZM666.5 242.5L671.5 225.5L662.5 231.5ZM653.5 238.5L666.5 242.5L662.5 231.5ZM658.5 220.5L671.5 225.5L662.5 231.5ZM666.5 242.5L671.5 225.5L675.5 236.5ZM679.5 246.5L685.5 230.5L675.5 236.5ZM666.5 242.5L679.5 246.5L675.5 236.5ZM671.5 225.5L685.5 230.5L675.5 236.5ZM645.5 216.5L652.5 198.5L655.5 209.5ZM658.5 220.5L665.5 203.5L655.5 209.5ZM645.5 216.5L658.5 220.5L655.5 209.5ZM652.5 198.5L665.5 203.5L655.5 209.5ZM658.5 220.5L665.5 203.5L668.5 214.5ZM671.5 225.5L678.5 208.5L668.5 214.5ZM658.5 220.5L671.5 225.5L668.5 214.5ZM665.5 203.5L678.5 208.5L668.5 214.5ZM671.5 225.5L678.5 208.5L681.5 219.5ZM685.5 230.5L691.5 213.5L681.5 219.5ZM671.5 225.5L685.5 230.5L681.5 219.5ZM678.5 208.5L691.5 213.5L681.5 219.5ZM652.5 198.5L660.5 182.5L662.5 193.5ZM665.5 203.5L672.5 188.5L662.5 193.5ZM652.5 198.5L665.5 203.5L662.5 193.5ZM660.5 182.5L672.5 188.5L662.5 193.5ZM665.5 203.5L672.5 188.5L675.5 198.5ZM678.5 208.5L685.5 194.5L675.5 198.5ZM665.5 203.5L678.5 208.5L675.5 198.5ZM672.5 188.5L685.5 194.5L675.5 198.5ZM678.5 208.5L685.5 194.5L688.5 204.5ZM691.5 213.5L698.5 200.5L688.5 204.5ZM678.5 208.5L691.5 213.5L688.5 204.5ZM685.5 194.5L698.5 200.5L688.5 204.5ZM660.5 182.5L668.5 166.5L670.5 177.5ZM672.5 188.5L681.5 172.5L670.5 177.5ZM660.5 182.5L672.5 188.5L670.5 177.5ZM668.5 166.5L681.5 172.5L670.5 177.5ZM672.5 188.5L681.5 172.5L683.5 183.5ZM685.5 194.5L693.5 178.5L683.5 183.5ZM672.5 188.5L685.5 194.5L683.5 183.5ZM681.5 172.5L693.5 178.5L683.5 183.5ZM685.5 194.5L693.5 178.5L696.5 189.5ZM698.5 200.5L706.5 184.5L696.5 189.5ZM685.5 194.5L698.5 200.5L696.5 189.5ZM693.5 178.5L706.5 184.5L696.5 189.5ZM668.5 166.5L676.5 150.5L678.5 161.5ZM681.5 172.5L688.5 157.5L678.5 161.5ZM668.5 166.5L681.5 172.5L678.5 161.5ZM676.5 150.5L688.5 157.5L678.5 161.5ZM681.5 172.5L688.5 157.5L691.5 168.5ZM693.5 178.5L701.5 164.5L691.5 168.5ZM681.5 172.5L693.5 178.5L691.5 168.5ZM688.5 157.5L701.5 164.5L691.5 168.5ZM693.5 178.5L701.5 164.5L704.5 174.5ZM706.5 184.5L714.5 171.5L704.5 174.5ZM693.5 178.5L706.5 184.5L704.5 174.5ZM701.5 164.5L714.5 171.5L704.5 174.5ZM676.5 150.5L684.5 134.5L686.5 146.5ZM688.5 157.5L697.5 141.5L686.5 146.5ZM676.5 150.5L688.5 157.5L686.5 146.5ZM684.5 134.5L697.5 141.5L686.5 146.5ZM688.5 157.5L697.5 141.5L699.5 153.5ZM701.5 164.5L709.5 148.5L699.5 153.5ZM688.5 157.5L701.5 164.5L699.5 153.5ZM697.5 141.5L709.5 148.5L699.5 153.5ZM701.5 164.5L709.5 148.5L712.5 159.5ZM714.5 171.5L722.5 155.5L712.5 159.5ZM701.5 164.5L714.5 171.5L712.5 159.5ZM709.5 148.5L722.5 155.5L712.5 159.5Z"/>
<path fill="#ffffff" stroke="none" d="M433.5 594.5L448.5 594.5L440.5 588.5ZM448.5 594.5L462.5 594.5L455.5 588.5ZM448.5 582.5L448.5 594.5L455.5 588.5ZM462.5 582.5L462.5 594.5L455.5 588.5ZM462.5 557.5L477.5 557.5L470.5 563.5ZM462.5 569.5L477.5 569.5L470.5 563.5ZM477.5 557.5L477.5 569.5L470.5 563.5ZM462.5 569.5L477.5 569.5L470.5 576.5ZM462.5 582.5L477.5 582.5L470.5 576.5ZM477.5 569.5L477.5 582.5L470.5 576.5ZM462.5 594.5L477.5 594.5L470.5 588.5ZM462.5 582.5L462.5 594.5L470.5 588.5ZM477.5 582.5L477.5 594.5L470.5 588.5ZM477.5 557.5L491.5 557.5L484.5 563.5ZM477.5 569.5L491.5 569.5L484.5 563.5ZM477.5 557.5L477.5 569.5L484.5 563.5ZM491.5 557.5L491.5 569.5L484.5 563.5ZM477.5 569.5L491.5 569.5L484.5 576.5ZM477.5 582.5L491.5 582.5L484.5 576.5ZM477.5 569.5L477.5 582.5L484.5 576.5ZM491.5 569.5L491.5 582.5L484.5 576.5ZM477.5 582.5L491.5 582.5L484.5 588.5ZM477.5 594.5L491.5 594.5L484.5 588.5ZM477.5 582.5L477.5 594.5L484.5 588.5ZM491.5 582.5L491.5 594.5L484.5 588.5ZM491.5 557.5L506.5 557.5L499.5 563.5ZM491.5 569.5L506.5 569.5L499.5 563.5ZM491.5 557.5L491.5 569.5L499.5 563.5ZM506.5 557.5L506.5 569.5L499.5 563.5ZM491.5 569.5L506.5 569.5L499.5 576.5ZM491.5 582.5L506.5 582.5L499.5 576.5ZM491.5 569.5L491.5 582.5L499.5 576.5ZM506.5 569.5L506.5 582.5L499.5 576.5ZM491.5 582.5L506.5 582.5L499.5 588.5ZM506.5 557.5L521.5 557.5L513.5 563.5ZM506.5 557.5L506.5 569.5L513.5 563.5ZM521.5 557.5L521.5 569.5L513.5 563.5ZM506.5 569.5L506.5 582.5L513.5 575.5ZM521.5 557.5L535.5 557.5L528.5 563.5ZM521.5 557.5L521.5 569.5L528.5 563.5ZM535.5 557.5L536.5 569.5L528.5 563.5ZM535.5 557.5L549.5 556.5L543.5 562.5ZM535.5 557.5L536.5 569.5L543.5 562.5ZM549.5 556.5L561.5 553.5L557.5 560.5ZM549.5 556.5L551.5 567.5L557.5 560.5ZM561.5 553.5L565.5 563.5L557.5 560.5ZM561.5 553.5L575.5 547.5L570.5 555.5ZM561.5 553.5L565.5 563.5L570.5 555.5ZM575.5 547.5L579.5 557.5L570.5 555.5ZM575.5 547.5L585.5 541.5L583.5 548.5ZM629.5 502.5L640.5 508.5L637.5 498.5ZM623.5 483.5L628.5 469.5L631.5 478.5ZM628.5 469.5L639.5 473.5L631.5 478.5ZM639.5 473.5L642.5 458.5L635.5 464.5ZM628.5 469.5L639.5 473.5L635.5 464.5ZM631.5 455.5L642.5 458.5L635.5 464.5ZM651.5 476.5L654.5 461.5L647.5 467.5ZM639.5 473.5L651.5 476.5L647.5 467.5ZM642.5 458.5L645.5 443.5L638.5 449.5ZM631.5 455.5L642.5 458.5L638.5 449.5ZM642.5 458.5L645.5 443.5L650.5 452.5ZM654.5 461.5L658.5 445.5L650.5 452.5ZM642.5 458.5L654.5 461.5L650.5 452.5ZM645.5 443.5L658.5 445.5L650.5 452.5ZM654.5 461.5L658.5 445.5L662.5 455.5ZM654.5 461.5L665.5 465.5L662.5 455.5ZM645.5 443.5L647.5 428.5L652.5 436.5ZM658.5 445.5L660.5 429.5L652.5 436.5ZM645.5 443.5L658.5 445.5L652.5 436.5ZM647.5 428.5L660.5 429.5L652.5 436.5ZM658.5 445.5L670.5 448.5L665.5 438.5ZM647.5 428.5L660.5 429.5L654.5 420.5ZM648.5 411.5L661.5 412.5L655.5 404.5ZM649.5 395.5L661.5 396.5L655.5 387.5ZM649.5 379.5L661.5 379.5L655.5 370.5ZM649.5 362.5L661.5 362.5L655.5 354.5ZM648.5 345.5L661.5 345.5L654.5 336.5ZM648.5 327.5L661.5 328.5L654.5 319.5Z"/>
<path fill="none" stroke="#000" stroke-width="1" d="M684 134.5h1m-1 1h3m-4 1h2m2 0h2m-6 1h1m1 0h1m3 0h2m-9 1h1m2 0h1m5 0h2m-11 1h1m2 0h1m7 0h2m-14 1h1m3 0h1m9 0h2m-16 1h1m3 0h1m10 0h2m-18 1h1m4 0h1m8 0h6m-20 1h1m5 0h1m5 0h2m2 0h2m2 0h2m-23 1h1m6 0h1m3 0h2m3 0h1m2 0h1m3 0h1m-24 1h1m6 0h1m1 0h2m5 0h1m2 0h1m4 0h2m-27 1h1m6 0h3m6 0h1m3 0h1m6 0h2m-29 1h1m4 0h2m1 0h1m7 0h1m3 0h1m8 0h2m-32 1h1m2 0h3m3 0h1m6 0h1m4 0h1m10 0h1m-33 1h3m7 0h1m5 0h1m4 0h1m8 0h5m-36 1h2m9 0h1m4 0h1m6 0h1m5 0h2m1 0h1m1 0h1m1 0h2m-38 1h3m8 0h1m3 0h1m7 0h1m3 0h2m3 0h1m1 0h1m3 0h2m-41 1h2m2 0h2m6 0h1m3 0h1m7 0h1m1 0h2m4 0h1m2 0h1m5 0h2m-43 1h1m1 0h1m3 0h1m5 0h1m2 0h1m7 0h3m6 0h1m2 0h1m7 0h2m-46 1h1m2 0h1m4 0h2m3 0h1m2 0h1m4 0h3m1 0h1m6 0h1m4 0h1m8 0h2m-48 1h1m2 0h1m6 0h2m2 0h2m3 0h2m4 0h1m6 0h1m4 0h1m9 0h2m-50 1h1m3 0h1m8 0h7m7 0h1m4 0h1m5 0h1m7 0h2m1 0h1m-50 1h1m3 0h1m9 0h3m10 0h1m4 0h1m5 0h1m4 0h3m2 0h1m-50 1h1m4 0h1m7 0h2m1 0h3m9 0h1m3 0h1m7 0h1m1 0h2m5 0h1m-50 1h1m5 0h1m3 0h3m2 0h1m1 0h1m1 0h2m7 0h1m3 0h1m6 0h3m6 0h1m-50 1h1m6 0h1m1 0h2m5 0h1m1 0h1m3 0h2m5 0h1m2 0h1m5 0h2m1 0h1m7 0h1m-50 1h1m5 0h3m6 0h1m2 0h1m5 0h2m3 0h1m2 0h1m3 0h2m3 0h1m6 0h1m-50 1h1m4 0h2m1 0h1m7 0h1m2 0h1m7 0h2m2 0h2m2 0h2m5 0h1m6 0h1m-50 1h1m2 0h2m4 0h1m5 0h1m4 0h1m8 0h6m8 0h1m4 0h1m-50 1h1m1 0h2m6 0h1m5 0h1m4 0h1m9 0h3m10 0h1m4 0h1m-50 1h2m8 0h1m4 0h1m5 0h1m7 0h6m9 0h1m3 0h1m-50 1h2m9 0h1m4 0h1m5 0h1m4 0h3m2 0h1m1 0h1m1 0h2m7 0h1m3 0h1m-50 1h1m1 0h2m8 0h1m2 0h1m7 0h1m1 0h2m4 0h1m2 0h1m3 0h2m5 0h1m2 0h1m-50 1h2m3 0h2m6 0h1m2 0h1m6 0h3m6 0h1m2 0h1m5 0h2m3 0h1m2 0h1m-50 1h1m1 0h1m4 0h2m4 0h1m1 0h1m5 0h2m1 0h1m6 0h1m4 0h1m6 0h2m2 0h2m-50 1h1m2 0h1m6 0h2m2 0h1m1 0h1m2 0h3m3 0h1m6 0h1m4 0h1m8 0h4m-50 1h1m2 0h1m8 0h2m1 0h1m1 0h2m7 0h1m4 0h1m5 0h1m9 0h2m-50 1h1m3 0h1m10 0h3m9 0h1m3 0h1m6 0h1m6 0h4m-49 1h1m3 0h1m8 0h6m8 0h1m3 0h1m7 0h1m1 0h4m3 0h1m-50 1h1m4 0h1m6 0h2m2 0h2m2 0h2m6 0h1m2 0h1m7 0h3m6 0h1m-49 1h1m5 0h1m3 0h2m3 0h1m2 0h1m3 0h2m4 0h1m2 0h1m4 0h3m1 0h1m7 0h1m-50 1h1m6 0h1m1 0h2m5 0h1m2 0h1m5 0h2m3 0h2m3 0h2m4 0h1m6 0h1m-49 1h1m5 0h3m6 0h1m3 0h1m7 0h2m1 0h5m7 0h1m4 0h1m-49 1h1m4 0h2m1 0h1m7 0h1m3 0h1m9 0h3m10 0h1m4 0h1m-49 1h1m2 0h2m3 0h1m6 0h1m4 0h1m8 0h3m1 0h2m8 0h1m3 0h1m-49 1h1m1 0h2m6 0h1m5 0h1m4 0h1m6 0h2m1 0h1m1 0h1m2 0h2m6 0h1m2 0h1m-48 1h2m8 0h1m4 0h1m6 0h1m3 0h2m3 0h1m1 0h1m4 0h2m4 0h1m2 0h1m-49 1h1m10 0h1m3 0h1m7 0h1m1 0h2m4 0h1m2 0h1m6 0h2m3 0h2m-48 1h3m8 0h1m3 0h1m6 0h3m6 0h1m2 0h1m8 0h2m1 0h2m-49 1h2m2 0h2m6 0h1m2 0h1m5 0h2m1 0h1m6 0h1m4 0h1m9 0h2m-48 1h1m1 0h1m3 0h2m4 0h1m2 0h1m3 0h2m3 0h1m6 0h1m4 0h1m8 0h3m-49 1h1m2 0h1m5 0h2m3 0h2m2 0h2m6 0h1m4 0h1m5 0h1m6 0h2m1 0h1m-48 1h1m2 0h1m7 0h2m1 0h4m8 0h1m4 0h1m5 0h1m4 0h2m3 0h1m-49 1h1m3 0h1m9 0h3m10 0h1m3 0h1m7 0h1m1 0h2m4 0h1m-48 1h1m3 0h1m8 0h3m1 0h2m8 0h1m3 0h1m6 0h3m6 0h1m-49 1h1m4 0h1m6 0h2m1 0h1m1 0h1m2 0h2m6 0h1m2 0h1m5 0h2m1 0h1m6 0h1m-48 1h1m5 0h1m3 0h2m3 0h1m1 0h1m4 0h2m4 0h1m2 0h1m3 0h2m3 0h1m6 0h1m-49 1h1m6 0h1m1 0h2m4 0h1m2 0h1m6 0h2m3 0h2m2 0h2m6 0h1m4 0h1m-48 1h1m5 0h3m6 0h1m3 0h1m7 0h2m1 0h4m8 0h1m4 0h1m-49 1h1m4 0h2m1 0h1m6 0h1m4 0h1m9 0h3m10 0h1m3 0h1m-48 1h1m2 0h2m4 0h1m5 0h1m4 0h1m7 0h2m1 0h1m1 0h2m8 0h1m3 0h1m-49 1h1m1 0h2m6 0h1m4 0h1m5 0h1m4 0h3m2 0h1m1 0h1m2 0h2m6 0h1m2 0h1m-48 1h2m8 0h1m4 0h1m6 0h1m1 0h2m5 0h1m1 0h1m4 0h2m4 0h1m2 0h1m-49 1h2m9 0h1m3 0h1m6 0h3m6 0h1m2 0h1m6 0h2m3 0h2m-48 1h1m1 0h2m8 0h1m2 0h1m4 0h2m1 0h1m7 0h1m3 0h1m7 0h2m1 0h2m-49 1h1m1 0h1m2 0h3m5 0h1m1 0h1m3 0h2m4 0h1m5 0h1m4 0h1m9 0h2m-48 1h1m1 0h1m5 0h3m2 0h1m1 0h1m1 0h2m6 0h1m5 0h1m4 0h1m7 0h3m-48 1h1m2 0h1m8 0h2m1 0h3m8 0h1m4 0h1m5 0h1m4 0h3m2 0h1m-48 1h1m2 0h1m10 0h3m9 0h1m4 0h1m6 0h1m1 0h2m4 0h1m-47 1h1m3 0h1m8 0h3m1 0h2m8 0h1m2 0h1m6 0h3m6 0h1m-48 1h1m4 0h1m6 0h2m1 0h1m1 0h1m2 0h3m5 0h1m2 0h1m4 0h2m1 0h1m6 0h1m-47 1h1m4 0h1m5 0h1m3 0h1m1 0h1m5 0h3m2 0h1m1 0h1m2 0h3m4 0h1m5 0h1m-47 1h1m4 0h1m3 0h2m3 0h1m2 0h1m8 0h2m1 0h4m7 0h1m4 0h1m-47 1h1m6 0h3m5 0h1m2 0h1m10 0h3m9 0h1m4 0h1m-47 1h1m6 0h1m7 0h1m3 0h1m8 0h3m1 0h2m8 0h1m2 0h1m-47 1h1m5 0h3m6 0h1m4 0h1m6 0h2m1 0h1m1 0h1m2 0h3m5 0h1m2 0h1m-47 1h1m4 0h1m3 0h1m5 0h1m4 0h1m5 0h1m3 0h1m1 0h1m5 0h3m2 0h1m1 0h1m-46 1h1m2 0h2m4 0h1m4 0h1m5 0h1m3 0h2m3 0h1m2 0h1m8 0h2m1 0h2m-47 1h1m2 0h1m6 0h1m4 0h1m6 0h3m5 0h1m2 0h1m10 0h2m-46 1h1m1 0h1m7 0h1m3 0h1m7 0h1m7 0h1m3 0h1m8 0h3m-47 1h3m9 0h1m2 0h1m5 0h3m6 0h1m4 0h1m6 0h2m1 0h1m-46 1h2m10 0h1m2 0h1m3 0h2m3 0h1m5 0h1m4 0h1m5 0h1m3 0h1m-46 1h1m1 0h3m7 0h1m1 0h1m3 0h1m5 0h1m4 0h1m5 0h1m3 0h2m4 0h1m-47 1h1m1 0h1m3 0h4m3 0h1m1 0h1m1 0h2m6 0h1m4 0h1m6 0h3m5 0h1m-46 1h1m1 0h1m7 0h3m1 0h3m8 0h1m3 0h1m7 0h1m7 0h1m-46 1h1m1 0h1m10 0h3m10 0h1m2 0h1m5 0h3m7 0h1m-46 1h1m2 0h1m9 0h2m1 0h2m8 0h1m2 0h1m3 0h2m3 0h1m5 0h1m-46 1h1m3 0h1m7 0h3m1 0h1m2 0h3m5 0h1m1 0h1m3 0h1m5 0h1m5 0h1m-46 1h1m4 0h1m5 0h1m2 0h1m1 0h1m5 0h3m2 0h1m1 0h1m1 0h2m6 0h1m4 0h1m-45 1h1m4 0h1m4 0h1m3 0h1m1 0h1m8 0h2m1 0h3m9 0h1m3 0h1m-45 1h1m4 0h1m2 0h2m4 0h1m2 0h1m9 0h3m10 0h1m3 0h1m-46 1h1m6 0h2m5 0h1m3 0h1m8 0h3m1 0h3m8 0h1m1 0h1m-45 1h1m6 0h1m6 0h1m4 0h1m6 0h1m1 0h1m1 0h1m3 0h2m6 0h1m1 0h1m-45 1h1m5 0h2m6 0h1m4 0h1m4 0h2m2 0h1m1 0h1m5 0h3m3 0h1m1 0h1m-45 1h1m4 0h1m2 0h1m5 0h1m4 0h1m3 0h1m4 0h1m1 0h1m8 0h3m1 0h1m-45 1h1m4 0h1m3 0h1m4 0h1m6 0h3m5 0h1m2 0h1m10 0h2m-45 1h1m2 0h2m4 0h1m4 0h1m6 0h1m6 0h1m3 0h1m9 0h3m-45 1h1m1 0h1m7 0h1m3 0h1m5 0h2m6 0h1m4 0h1m6 0h2m1 0h1m-44 1h2m8 0h1m2 0h1m4 0h2m2 0h1m5 0h1m4 0h1m5 0h1m3 0h1m-45 1h2m10 0h1m1 0h1m3 0h1m4 0h1m4 0h1m5 0h1m3 0h2m4 0h1m-45 1h3m9 0h1m1 0h1m2 0h1m5 0h1m4 0h1m6 0h3m5 0h1m-44 1h2m1 0h4m5 0h1m1 0h3m7 0h1m3 0h1m6 0h1m7 0h1m-44 1h2m5 0h4m2 0h2m9 0h1m2 0h1m5 0h3m6 0h1m-44 1h1m2 0h1m8 0h4m10 0h1m1 0h1m4 0h1m3 0h1m5 0h1m-44 1h1m2 0h1m9 0h2m1 0h3m7 0h1m1 0h1m2 0h2m4 0h1m5 0h1m-44 1h1m3 0h1m7 0h1m1 0h2m3 0h4m3 0h1m1 0h1m1 0h1m7 0h1m3 0h1m-43 1h1m3 0h1m6 0h1m1 0h1m1 0h1m7 0h3m1 0h3m8 0h1m3 0h1m-44 1h1m5 0h1m3 0h2m2 0h1m2 0h1m9 0h3m9 0h1m3 0h1m-44 1h1m5 0h1m2 0h1m4 0h1m2 0h1m9 0h6m7 0h1m1 0h1m-43 1h1m6 0h2m5 0h1m3 0h1m7 0h1m1 0h2m3 0h4m3 0h1m1 0h1m-43 1h1m6 0h1m6 0h1m3 0h1m6 0h1m1 0h1m2 0h1m6 0h3m1 0h1m-43 1h1m6 0h2m6 0h1m4 0h1m3 0h2m2 0h1m2 0h1m9 0h2m-43 1h1m4 0h2m2 0h1m4 0h1m5 0h1m2 0h1m4 0h1m3 0h1m8 0h2m-43 1h1m3 0h1m4 0h1m4 0h1m6 0h2m5 0h1m3 0h1m6 0h2m1 0h1m-43 1h1m2 0h1m6 0h1m3 0h1m6 0h1m6 0h1m4 0h1m4 0h1m2 0h1m-43 1h1m1 0h2m7 0h1m3 0h1m4 0h3m6 0h1m4 0h1m3 0h1m3 0h1m-43 1h2m10 0h1m2 0h1m3 0h1m3 0h1m4 0h1m6 0h3m4 0h1m-43 1h3m9 0h1m2 0h1m2 0h1m4 0h1m4 0h1m6 0h1m6 0h1m-43 1h2m1 0h4m6 0h2m1 0h2m6 0h1m3 0h1m5 0h2m6 0h1m-43 1h2m5 0h5m1 0h3m8 0h1m3 0h1m4 0h1m2 0h1m5 0h1m-43 1h1m1 0h1m9 0h4m9 0h1m2 0h1m2 0h2m3 0h1m4 0h1m-42 1h1m1 0h1m10 0h2m1 0h3m6 0h1m2 0h1m1 0h1m6 0h1m3 0h1m-42 1h1m2 0h1m8 0h1m1 0h2m3 0h4m3 0h2m1 0h1m7 0h1m3 0h1m-42 1h1m2 0h1m7 0h1m2 0h2m7 0h6m9 0h1m2 0h1m-42 1h1m3 0h1m5 0h1m3 0h1m1 0h1m9 0h4m8 0h1m2 0h1m-42 1h1m3 0h1m5 0h1m3 0h1m1 0h1m9 0h3m1 0h4m5 0h2m-41 1h1m4 0h1m3 0h1m3 0h1m3 0h1m7 0h1m1 0h2m5 0h4m1 0h2m-41 1h1m4 0h1m2 0h1m4 0h1m3 0h1m6 0h1m2 0h1m1 0h1m8 0h3m-42 1h1m6 0h2m5 0h1m4 0h1m3 0h2m3 0h1m1 0h1m9 0h2m-42 1h1m6 0h1m6 0h1m4 0h1m2 0h1m4 0h1m3 0h1m6 0h2m1 0h1m-42 1h1m5 0h1m1 0h1m5 0h1m5 0h2m5 0h1m3 0h1m5 0h1m3 0h1m-42 1h1m4 0h1m2 0h1m5 0h1m5 0h1m6 0h1m4 0h1m3 0h1m3 0h1m-41 1h1m4 0h1m3 0h1m4 0h1m4 0h1m1 0h1m5 0h1m4 0h1m1 0h2m4 0h1m-41 1h1m3 0h1m4 0h1m4 0h1m3 0h1m2 0h1m5 0h1m5 0h1m6 0h1m-41 1h1m2 0h1m6 0h1m3 0h1m3 0h1m3 0h1m4 0h1m4 0h1m1 0h1m5 0h1m-41 1h1m1 0h1m7 0h1m3 0h1m2 0h1m4 0h1m4 0h1m3 0h1m2 0h1m5 0h1m-41 1h1m1 0h1m8 0h1m1 0h1m2 0h1m6 0h1m3 0h1m2 0h1m4 0h1m4 0h1m-41 1h2m9 0h1m1 0h1m1 0h1m8 0h1m1 0h1m3 0h1m5 0h1m3 0h1m-41 1h4m8 0h2m1 0h1m8 0h1m1 0h1m2 0h1m6 0h1m3 0h1m-41 1h2m2 0h6m2 0h3m10 0h2m1 0h1m8 0h1m1 0h1m-40 1h2m8 0h10m5 0h3m10 0h2m-40 1h1m1 0h1m9 0h3m5 0h13m5 0h2m-40 1h1m1 0h1m8 0h1m1 0h2m10 0h3m5 0h7m-40 1h1m2 0h1m6 0h1m2 0h1m1 0h1m8 0h1m1 0h2m10 0h2m-40 1h1m3 0h1m4 0h1m3 0h1m2 0h1m6 0h1m2 0h1m1 0h1m8 0h1m1 0h1m-40 1h1m3 0h1m4 0h1m3 0h1m2 0h1m5 0h1m3 0h1m2 0h1m6 0h1m2 0h1m-40 1h1m4 0h1m2 0h1m4 0h1m3 0h1m4 0h1m3 0h1m2 0h1m5 0h1m3 0h1m-40 1h1m4 0h1m1 0h1m5 0h1m4 0h1m2 0h1m4 0h1m3 0h1m4 0h1m3 0h1m-41 1h1m6 0h1m6 0h1m4 0h1m1 0h1m5 0h1m4 0h1m2 0h1m4 0h1m-41 1h1m5 0h1m1 0h1m4 0h1m6 0h1m6 0h1m4 0h1m1 0h1m5 0h1m-41 1h1m4 0h1m2 0h1m4 0h1m5 0h1m1 0h1m5 0h1m5 0h1m6 0h1m-41 1h1m4 0h1m3 0h1m3 0h1m4 0h1m3 0h1m4 0h1m4 0h1m1 0h1m5 0h1m-41 1h1m3 0h1m5 0h1m2 0h1m3 0h1m4 0h1m4 0h1m4 0h1m2 0h1m4 0h1m-41 1h1m2 0h1m6 0h1m2 0h1m3 0h1m5 0h1m3 0h1m3 0h1m4 0h1m3 0h1m-41 1h1m1 0h1m8 0h1m1 0h1m2 0h1m7 0h1m2 0h1m2 0h1m5 0h1m3 0h1m-41 1h1m1 0h1m9 0h2m1 0h1m9 0h1m1 0h1m1 0h1m7 0h1m2 0h1m-41 1h2m10 0h3m10 0h1m1 0h1m1 0h1m8 0h1m1 0h1m-41 1h20m6 0h3m10 0h2m-41 1h2m10 0h3m5 0h21m-41 1h1m1 0h1m9 0h2m1 0h1m10 0h3m10 0h2m-41 1h1m1 0h1m8 0h1m1 0h1m1 0h1m9 0h1m1 0h2m9 0h1m1 0h1m-41 1h1m2 0h1m6 0h1m2 0h1m2 0h1m7 0h1m2 0h1m1 0h1m8 0h1m1 0h1m-41 1h1m3 0h1m5 0h1m2 0h1m3 0h1m5 0h1m3 0h1m2 0h1m6 0h1m2 0h1m-41 1h1m4 0h1m3 0h1m3 0h1m4 0h1m4 0h1m3 0h1m2 0h1m5 0h1m3 0h1m-41 1h1m4 0h1m2 0h1m4 0h1m4 0h1m3 0h1m4 0h1m3 0h1m3 0h1m4 0h1m-41 1h1m5 0h1m1 0h1m4 0h1m5 0h1m1 0h1m5 0h1m4 0h1m2 0h1m4 0h1m-41 1h1m6 0h1m5 0h1m6 0h1m6 0h1m4 0h1m1 0h1m5 0h1m-40 1h1m4 0h1m1 0h1m5 0h1m4 0h1m1 0h1m5 0h1m5 0h1m6 0h1m-40 1h1m4 0h1m2 0h1m4 0h1m4 0h1m2 0h1m4 0h1m4 0h1m1 0h1m5 0h1m-40 1h1m3 0h1m3 0h1m4 0h1m3 0h1m3 0h1m4 0h1m4 0h1m2 0h1m4 0h1m-40 1h1m2 0h1m5 0h1m3 0h1m2 0h1m5 0h1m3 0h1m3 0h1m3 0h1m4 0h1m-40 1h1m2 0h1m6 0h1m2 0h1m2 0h1m6 0h1m2 0h1m2 0h1m5 0h1m3 0h1m-40 1h1m1 0h1m8 0h1m1 0h1m1 0h1m8 0h1m1 0h1m1 0h1m7 0h1m2 0h1m-40 1h2m9 0h1m1 0h2m9 0h1m1 0h1m1 0h1m8 0h1m1 0h1m-40 1h2m10 0h3m10 0h3m9 0h1m1 0h1m-40 1h33m5 0h2m-40 1h2m10 0h3m10 0h3m5 0h7m-40 1h1m1 0h1m8 0h1m1 0h2m9 0h1m1 0h2m10 0h2m-40 1h1m1 0h1m7 0h1m2 0h1m1 0h1m8 0h1m1 0h1m1 0h1m8 0h1m1 0h1m-40 1h1m2 0h1m5 0h1m3 0h1m2 0h1m6 0h1m2 0h1m2 0h1m6 0h1m2 0h1m-40 1h1m3 0h1m4 0h1m3 0h1m2 0h1m5 0h1m3 0h1m2 0h1m5 0h1m3 0h1m-40 1h1m4 0h1m2 0h1m4 0h1m3 0h1m3 0h1m4 0h1m3 0h1m4 0h1m3 0h1m-40 1h1m4 0h1m1 0h1m5 0h1m4 0h1m2 0h1m4 0h1m4 0h1m2 0h1m4 0h1m-40 1h1m5 0h1m6 0h1m4 0h1m1 0h1m5 0h1m4 0h1m1 0h1m5 0h1m-40 1h1m4 0h1m1 0h1m5 0h1m5 0h1m6 0h1m5 0h1m6 0h1m-40 1h1m4 0h1m2 0h1m4 0h1m4 0h1m1 0h1m5 0h1m4 0h1m1 0h1m5 0h1m-40 1h1m3 0h1m3 0h1m4 0h1m4 0h1m2 0h1m4 0h1m4 0h1m2 0h1m4 0h1m-40 1h1m2 0h1m5 0h1m3 0h1m3 0h1m3 0h1m4 0h1m3 0h1m3 0h1m4 0h1m-40 1h1m2 0h1m6 0h1m2 0h1m2 0h1m5 0h1m3 0h1m2 0h1m5 0h1m3 0h1m-40 1h1m1 0h1m8 0h1m1 0h1m1 0h1m7 0h1m2 0h1m2 0h1m6 0h1m2 0h1m-40 1h2m9 0h1m1 0h1m1 0h1m8 0h1m1 0h1m1 0h1m8 0h1m1 0h1m-40 1h2m10 0h3m9 0h1m1 0h2m9 0h1m1 0h1m-40 1h20m5 0h3m10 0h2m-40 1h2m10 0h3m5 0h20m-40 1h1m1 0h1m9 0h3m10 0h3m10 0h2m-40 1h1m1 0h1m8 0h1m1 0h1m1 0h1m8 0h1m1 0h2m9 0h1m1 0h1m-40 1h1m2 0h1m6 0h1m2 0h1m2 0h1m6 0h1m2 0h1m1 0h1m8 0h1m1 0h1m-40 1h1m3 0h1m5 0h1m2 0h1m2 0h1m5 0h1m3 0h1m2 0h1m6 0h1m2 0h1m-40 1h1m4 0h1m3 0h1m3 0h1m3 0h1m4 0h1m3 0h1m2 0h1m5 0h1m3 0h1m-40 1h1m4 0h1m2 0h1m4 0h1m4 0h1m2 0h1m4 0h1m3 0h1m3 0h1m4 0h1m-40 1h1m5 0h1m1 0h1m4 0h1m4 0h1m1 0h1m5 0h1m4 0h1m2 0h1m4 0h1m-40 1h1m6 0h1m5 0h1m5 0h1m6 0h1m4 0h1m1 0h1m5 0h1m-39 1h1m4 0h1m1 0h1m4 0h1m4 0h1m1 0h1m5 0h1m5 0h1m6 0h1m-39 1h1m4 0h1m1 0h1m4 0h1m4 0h1m2 0h1m4 0h1m4 0h1m1 0h1m5 0h1m-39 1h1m3 0h1m3 0h1m3 0h1m3 0h1m3 0h1m4 0h1m4 0h1m2 0h1m4 0h1m-39 1h1m2 0h1m5 0h1m2 0h1m2 0h1m5 0h1m3 0h1m3 0h1m3 0h1m4 0h1m-39 1h1m2 0h1m5 0h1m2 0h1m2 0h1m6 0h1m2 0h1m2 0h1m5 0h1m3 0h1m-39 1h1m1 0h1m7 0h1m1 0h1m1 0h1m8 0h1m1 0h1m1 0h1m7 0h1m2 0h1m-39 1h2m9 0h3m9 0h1m1 0h1m1 0h1m8 0h1m1 0h1m-39 1h2m9 0h3m10 0h3m9 0h1m1 0h1m-39 1h32m5 0h2m-39 1h2m9 0h3m10 0h3m5 0h7m-39 1h1m1 0h1m7 0h1m1 0h1m1 0h1m9 0h3m10 0h2m-39 1h1m1 0h1m7 0h1m1 0h1m1 0h1m8 0h1m1 0h1m1 0h1m8 0h1m1 0h1m-39 1h1m2 0h1m5 0h1m2 0h1m2 0h1m6 0h1m2 0h1m2 0h1m6 0h1m2 0h1m-39 1h1m3 0h1m3 0h1m3 0h1m3 0h1m5 0h1m2 0h1m2 0h1m5 0h1m3 0h1m-39 1h1m4 0h1m1 0h1m4 0h1m4 0h1m3 0h1m3 0h1m3 0h1m4 0h1m3 0h1m-39 1h1m4 0h1m1 0h1m4 0h1m4 0h1m2 0h1m4 0h1m4 0h1m2 0h1m4 0h1m-39 1h1m5 0h1m5 0h1m5 0h1m1 0h1m4 0h1m4 0h1m1 0h1m5 0h1m-39 1h1m4 0h1m1 0h1m5 0h1m5 0h1m5 0h1m5 0h1m6 0h1m-39 1h1m4 0h1m2 0h1m4 0h1m4 0h1m1 0h1m4 0h1m4 0h1m1 0h1m5 0h1m-39 1h1m3 0h1m3 0h1m4 0h1m4 0h1m1 0h1m4 0h1m4 0h1m2 0h1m4 0h1m-39 1h1m2 0h1m5 0h1m3 0h1m3 0h1m3 0h1m3 0h1m3 0h1m3 0h1m4 0h1m-39 1h1m2 0h1m6 0h1m2 0h1m2 0h1m5 0h1m2 0h1m2 0h1m5 0h1m3 0h1m-39 1h1m1 0h1m8 0h1m1 0h1m1 0h1m7 0h1m1 0h1m1 0h1m7 0h1m2 0h1m-39 1h2m9 0h1m1 0h1m1 0h1m7 0h1m1 0h1m1 0h1m8 0h1m1 0h1m-39 1h2m10 0h3m9 0h3m9 0h1m1 0h1m-39 1h32m5 0h2m-39 1h2m10 0h3m9 0h3m5 0h7m-39 1h1m1 0h1m8 0h1m1 0h1m1 0h1m7 0h1m1 0h2m10 0h2m-39 1h1m1 0h1m7 0h1m2 0h1m1 0h1m7 0h1m1 0h1m1 0h1m8 0h1m1 0h1m-39 1h1m2 0h1m5 0h1m3 0h1m2 0h1m5 0h1m2 0h1m2 0h1m6 0h1m2 0h1m-39 1h1m3 0h1m4 0h1m3 0h1m3 0h1m3 0h1m3 0h1m2 0h1m5 0h1m3 0h1m-39 1h1m4 0h1m2 0h1m4 0h1m4 0h1m1 0h1m4 0h1m3 0h1m4 0h1m3 0h1m-39 1h1m4 0h1m1 0h1m5 0h1m4 0h1m1 0h1m4 0h1m4 0h1m2 0h1m4 0h1m-39 1h1m5 0h1m6 0h1m5 0h1m5 0h1m4 0h1m1 0h1m5 0h1m-39 1h1m4 0h1m1 0h1m5 0h1m4 0h1m1 0h1m4 0h1m5 0h1m6 0h1m-39 1h1m4 0h1m2 0h1m4 0h1m4 0h1m1 0h1m4 0h1m4 0h1m1 0h1m5 0h1m-39 1h1m3 0h1m3 0h1m4 0h1m3 0h1m3 0h1m3 0h1m4 0h1m2 0h1m4 0h1m-39 1h1m2 0h1m5 0h1m3 0h1m2 0h1m5 0h1m2 0h1m3 0h1m4 0h1m3 0h1m-39 1h1m1 0h1m7 0h1m2 0h1m2 0h1m5 0h1m2 0h1m2 0h1m5 0h1m3 0h1m-39 1h1m1 0h1m8 0h1m1 0h1m1 0h1m7 0h1m1 0h1m1 0h1m7 0h1m2 0h1m-39 1h2m9 0h1m1 0h2m9 0h2m1 0h1m8 0h1m1 0h1m-39 1h7m5 0h3m9 0h3m10 0h2m-39 1h2m5 0h32m-39 1h2m10 0h3m9 0h3m10 0h2m-39 1h1m1 0h1m8 0h1m1 0h1m1 0h1m7 0h1m1 0h1m1 0h1m8 0h1m1 0h1m-39 1h1m2 0h1m6 0h1m2 0h1m1 0h1m7 0h1m1 0h1m1 0h1m7 0h1m2 0h1m-39 1h1m2 0h1m5 0h1m3 0h1m2 0h1m5 0h1m2 0h1m2 0h1m5 0h1m3 0h1m-39 1h1m3 0h1m4 0h1m3 0h1m3 0h1m3 0h1m3 0h1m3 0h1m4 0h1m3 0h1m-39 1h1m4 0h1m2 0h1m4 0h1m4 0h1m1 0h1m4 0h1m4 0h1m2 0h1m4 0h1m-39 1h1m4 0h1m1 0h1m5 0h1m4 0h1m1 0h1m4 0h1m4 0h1m1 0h1m5 0h1m-39 1h1m5 0h1m6 0h1m5 0h1m5 0h1m5 0h1m6 0h1m-39 1h1m4 0h1m1 0h1m5 0h1m4 0h1m1 0h1m4 0h1m4 0h1m1 0h1m5 0h1m-39 1h1m4 0h1m2 0h1m4 0h1m4 0h1m1 0h1m4 0h1m4 0h1m2 0h1m4 0h1m-39 1h1m3 0h1m4 0h1m3 0h1m3 0h1m3 0h1m3 0h1m3 0h1m3 0h1m4 0h1m-39 1h1m2 0h1m5 0h1m3 0h1m2 0h1m5 0h1m2 0h1m2 0h1m5 0h1m3 0h1m-39 1h1m1 0h1m7 0h1m2 0h1m1 0h1m6 0h1m2 0h1m2 0h1m6 0h1m2 0h1m-39 1h1m1 0h1m8 0h1m1 0h1m1 0h1m7 0h1m1 0h1m1 0h1m8 0h1m1 0h1m-39 1h2m10 0h3m9 0h3m9 0h1m1 0h1m-39 1h19m5 0h3m10 0h2m-39 1h2m10 0h3m4 0h20m-39 1h1m1 0h1m8 0h1m1 0h2m9 0h3m10 0h2m-39 1h1m1 0h1m7 0h1m2 0h1m1 0h1m7 0h1m1 0h1m1 0h1m8 0h1m1 0h1m-39 1h1m2 0h1m5 0h1m3 0h1m2 0h1m6 0h1m1 0h1m1 0h1m7 0h1m2 0h1m-39 1h1m3 0h1m4 0h1m3 0h1m2 0h1m5 0h1m2 0h1m2 0h1m5 0h1m3 0h1m-39 1h1m4 0h1m2 0h1m4 0h1m3 0h1m3 0h1m3 0h1m3 0h1m4 0h1m3 0h1m-39 1h1m4 0h1m1 0h1m5 0h1m4 0h1m1 0h1m4 0h1m4 0h1m2 0h1m4 0h1m-39 1h1m5 0h1m6 0h1m4 0h1m1 0h1m4 0h1m4 0h1m1 0h1m5 0h1m-39 1h1m4 0h1m1 0h1m4 0h1m6 0h1m5 0h1m5 0h1m6 0h1m-39 1h1m4 0h1m1 0h1m4 0h1m5 0h1m1 0h1m4 0h1m4 0h1m1 0h1m4 0h1m-38 1h1m3 0h1m3 0h1m3 0h1m4 0h1m2 0h1m4 0h1m4 0h1m1 0h1m4 0h1m-38 1h1m2 0h1m5 0h1m2 0h1m3 0h1m4 0h1m3 0h1m3 0h1m3 0h1m3 0h1m-38 1h1m1 0h1m7 0h1m1 0h1m2 0h1m6 0h1m2 0h1m2 0h1m5 0h1m2 0h1m-38 1h1m1 0h1m7 0h1m1 0h1m1 0h1m8 0h1m1 0h1m1 0h1m7 0h1m1 0h1m-38 1h2m9 0h3m9 0h1m1 0h1m1 0h1m7 0h1m1 0h1m-38 1h19m5 0h3m9 0h2m-38 1h2m9 0h3m5 0h19m-38 1h2m8 0h1m1 0h2m10 0h3m9 0h2m-38 1h1m1 0h1m6 0h1m2 0h1m1 0h1m8 0h1m1 0h2m8 0h1m1 0h1m-38 1h1m2 0h1m4 0h1m3 0h1m2 0h1m6 0h1m2 0h1m1 0h1m7 0h1m1 0h1m-38 1h1m2 0h1m4 0h1m3 0h1m2 0h1m5 0h1m3 0h1m1 0h1m6 0h1m2 0h1m-38 1h1m3 0h1m2 0h1m4 0h1m3 0h1m4 0h1m3 0h1m2 0h1m4 0h1m3 0h1m-38 1h1m3 0h1m1 0h1m5 0h1m4 0h1m2 0h1m4 0h1m2 0h1m3 0h1m4 0h1m-39 1h1m5 0h1m6 0h1m4 0h1m1 0h1m5 0h1m3 0h1m2 0h1m4 0h1m-39 1h1m4 0h1m1 0h1m4 0h1m6 0h1m6 0h1m3 0h1m1 0h1m5 0h1m-39 1h1m3 0h1m2 0h1m4 0h1m5 0h1m1 0h1m4 0h1m5 0h1m6 0h1m-39 1h1m2 0h1m4 0h1m3 0h1m4 0h1m2 0h1m4 0h1m4 0h1m1 0h1m4 0h1m-38 1h1m2 0h1m5 0h1m2 0h1m3 0h1m4 0h1m3 0h1m4 0h1m1 0h1m4 0h1m-38 1h1m1 0h1m6 0h1m2 0h1m3 0h1m5 0h1m2 0h1m3 0h1m3 0h1m3 0h1m-38 1h2m8 0h1m1 0h1m2 0h1m6 0h1m2 0h1m2 0h1m5 0h1m2 0h1m-38 1h3m8 0h2m1 0h1m8 0h1m1 0h1m1 0h1m6 0h1m2 0h1m-38 1h2m1 0h6m2 0h3m10 0h2m1 0h1m7 0h1m1 0h1m-38 1h2m7 0h10m5 0h3m9 0h2m-38 1h1m1 0h1m8 0h3m5 0h12m5 0h2m-39 1h1m3 0h1m6 0h1m1 0h2m10 0h3m4 0h7m-39 1h1m3 0h1m4 0h2m2 0h1m1 0h1m8 0h1m1 0h2m9 0h2m-39 1h1m4 0h1m2 0h1m3 0h1m3 0h1m6 0h1m2 0h1m1 0h1m7 0h1m1 0h1m-39 1h1m4 0h1m1 0h1m4 0h1m3 0h1m4 0h2m3 0h1m1 0h1m6 0h1m2 0h1m-39 1h1m5 0h1m5 0h1m4 0h1m2 0h1m4 0h1m3 0h1m4 0h1m3 0h1m-39 1h1m4 0h1m1 0h1m4 0h1m4 0h1m1 0h1m5 0h1m3 0h1m4 0h1m2 0h1m-38 1h1m3 0h1m2 0h1m4 0h1m5 0h1m6 0h1m4 0h1m2 0h1m3 0h1m-38 1h1m2 0h1m4 0h1m3 0h1m4 0h1m1 0h1m5 0h1m4 0h1m1 0h1m4 0h1m-39 1h1m2 0h1m5 0h1m3 0h1m3 0h1m2 0h1m5 0h1m5 0h1m5 0h1m-39 1h1m1 0h1m7 0h1m2 0h1m2 0h1m4 0h1m4 0h1m4 0h2m5 0h1m-39 1h2m8 0h1m1 0h1m2 0h1m6 0h1m3 0h1m3 0h1m2 0h1m4 0h1m-39 1h3m8 0h2m1 0h1m7 0h1m3 0h1m2 0h1m3 0h1m4 0h1m-39 1h2m1 0h6m2 0h3m9 0h1m1 0h1m2 0h1m5 0h1m3 0h1m-39 1h2m7 0h7m8 0h2m1 0h1m6 0h1m3 0h1m-39 1h1m1 0h1m8 0h3m2 0h6m2 0h3m8 0h1m1 0h1m-39 1h1m3 0h1m6 0h1m1 0h2m8 0h5m8 0h1m1 0h1m-39 1h1m3 0h1m4 0h2m1 0h1m2 0h1m9 0h2m1 0h4m5 0h2m-39 1h1m4 0h1m2 0h1m3 0h1m2 0h1m8 0h1m1 0h2m4 0h4m1 0h2m-39 1h1m4 0h1m1 0h1m4 0h1m3 0h1m6 0h1m1 0h1m1 0h1m8 0h3m-39 1h1m5 0h1m5 0h1m3 0h1m4 0h2m2 0h1m2 0h1m8 0h2m-39 1h1m4 0h2m5 0h1m4 0h1m2 0h1m4 0h1m2 0h1m7 0h2m-38 1h1m3 0h1m2 0h1m3 0h1m5 0h1m1 0h1m5 0h1m2 0h1m6 0h1m1 0h1m-39 1h1m2 0h2m3 0h1m3 0h1m6 0h1m5 0h1m4 0h1m3 0h2m2 0h1m-39 1h1m1 0h1m6 0h1m2 0h1m4 0h3m5 0h1m4 0h1m2 0h1m4 0h1m-39 1h2m7 0h1m2 0h1m3 0h1m3 0h1m4 0h1m5 0h2m4 0h1m-38 1h2m8 0h1m1 0h1m2 0h1m4 0h1m4 0h1m5 0h1m5 0h1m-38 1h1m1 0h4m4 0h2m1 0h2m6 0h1m2 0h1m4 0h3m5 0h1m-38 1h2m4 0h4m1 0h2m8 0h1m2 0h1m3 0h1m3 0h1m3 0h1m-38 1h1m1 0h1m8 0h3m9 0h1m1 0h1m2 0h1m4 0h1m3 0h1m-38 1h1m2 0h1m7 0h7m5 0h1m1 0h3m5 0h1m3 0h1m-38 1h1m2 0h1m6 0h1m1 0h2m4 0h4m2 0h2m7 0h1m2 0h1m-37 1h1m3 0h1m3 0h2m1 0h1m2 0h1m7 0h4m8 0h1m1 0h1m-37 1h1m3 0h1m2 0h1m3 0h1m2 0h1m8 0h2m1 0h3m5 0h1m1 0h1m-38 1h1m5 0h2m4 0h1m3 0h1m6 0h1m1 0h2m3 0h2m3 0h1m1 0h1m-38 1h1m5 0h1m5 0h1m3 0h1m4 0h2m1 0h1m1 0h1m5 0h3m1 0h1m-37 1h1m3 0h3m5 0h1m4 0h1m2 0h1m3 0h1m2 0h1m7 0h2m-37 1h1m2 0h1m3 0h1m3 0h1m5 0h1m1 0h1m4 0h1m2 0h1m6 0h3m-38 1h1m2 0h1m4 0h1m3 0h1m6 0h1m5 0h1m3 0h1m4 0h1m2 0h1m-38 1h3m6 0h1m2 0h1m4 0h3m5 0h1m3 0h1m3 0h1m2 0h1m-37 1h2m7 0h1m2 0h1m3 0h1m3 0h1m3 0h1m5 0h3m3 0h1m-37 1h1m1 0h3m5 0h1m1 0h1m2 0h1m4 0h1m3 0h1m5 0h1m5 0h1m-38 1h1m1 0h1m3 0h2m3 0h2m1 0h2m6 0h1m2 0h1m4 0h2m5 0h1m-38 1h1m1 0h1m5 0h3m1 0h2m8 0h1m2 0h1m3 0h1m2 0h1m4 0h1m-38 1h1m1 0h1m8 0h3m9 0h1m1 0h1m1 0h2m3 0h1m3 0h1m-38 1h1m3 0h1m6 0h3m1 0h4m5 0h2m1 0h1m6 0h1m2 0h1m-38 1h1m3 0h1m5 0h1m1 0h1m1 0h1m4 0h4m2 0h2m7 0h1m2 0h1m-38 1h1m3 0h1m3 0h2m2 0h1m1 0h1m8 0h4m8 0h1m1 0h1m-39 1h1m5 0h3m4 0h1m1 0h1m8 0h3m1 0h4m4 0h2m-38 1h1m5 0h1m5 0h1m3 0h1m6 0h1m1 0h2m5 0h4m1 0h1m-39 1h1m4 0h3m5 0h1m3 0h1m4 0h2m2 0h1m1 0h1m8 0h2m-39 1h1m2 0h2m3 0h1m4 0h1m3 0h1m3 0h1m4 0h1m1 0h1m8 0h2m-39 1h1m1 0h1m5 0h1m3 0h1m5 0h3m4 0h1m2 0h1m6 0h3m-39 1h3m6 0h1m3 0h1m5 0h1m6 0h1m2 0h1m5 0h1m2 0h1m-39 1h2m7 0h1m3 0h1m3 0h3m5 0h1m3 0h1m4 0h1m2 0h1m-38 1h1m1 0h2m6 0h1m1 0h1m3 0h1m3 0h1m4 0h1m4 0h1m1 0h2m3 0h1m-39 1h1m1 0h1m2 0h2m4 0h1m1 0h1m2 0h1m4 0h1m4 0h1m4 0h2m5 0h1m-39 1h1m1 0h1m4 0h2m2 0h1m1 0h3m5 0h1m3 0h1m5 0h1m5 0h1m-38 1h1m1 0h1m6 0h2m1 0h2m7 0h1m3 0h1m3 0h3m5 0h1m-38 1h1m2 0h1m7 0h3m8 0h1m2 0h1m2 0h1m2 0h1m5 0h1m-39 1h1m3 0h1m6 0h3m1 0h3m5 0h1m1 0h1m2 0h1m4 0h1m3 0h1m-38 1h1m3 0h1m5 0h1m1 0h1m1 0h1m3 0h2m3 0h1m1 0h3m5 0h1m3 0h1m-38 1h1m3 0h1m3 0h2m2 0h1m1 0h1m5 0h3m1 0h2m7 0h1m2 0h1m-38 1h1m5 0h3m4 0h1m1 0h1m8 0h2m8 0h1m2 0h1m-38 1h1m5 0h1m5 0h1m3 0h1m7 0h4m6 0h1m2 0h1m-38 1h1m3 0h3m5 0h1m3 0h1m5 0h4m2 0h2m4 0h1m1 0h1m-37 1h1m1 0h2m3 0h1m4 0h1m3 0h1m4 0h1m2 0h1m1 0h1m3 0h2m3 0h2m-38 1h3m5 0h1m3 0h1m4 0h1m3 0h1m3 0h1m1 0h1m5 0h2m1 0h1m-37 1h1m7 0h1m3 0h1m5 0h3m3 0h1m2 0h1m7 0h2m-38 1h4m6 0h1m1 0h1m5 0h2m5 0h1m2 0h1m6 0h3m-38 1h2m2 0h2m4 0h1m1 0h1m3 0h2m1 0h1m5 0h1m2 0h1m5 0h1m1 0h1m-38 1h1m1 0h1m4 0h2m2 0h1m1 0h1m1 0h2m4 0h1m4 0h1m3 0h1m2 0h2m2 0h1m-38 1h1m1 0h1m6 0h2m1 0h3m6 0h1m3 0h1m4 0h3m4 0h1m-39 1h1m3 0h1m7 0h2m8 0h1m3 0h1m4 0h1m5 0h1m-38 1h1m3 0h1m5 0h2m1 0h3m6 0h1m3 0h1m3 0h2m5 0h1m-39 1h1m4 0h1m3 0h2m2 0h2m2 0h2m5 0h1m1 0h1m3 0h1m2 0h1m4 0h1m-39 1h1m4 0h1m1 0h2m4 0h2m4 0h2m3 0h1m1 0h1m1 0h2m3 0h1m4 0h1m-40 1h1m4 0h3m5 0h1m1 0h1m6 0h2m1 0h1m1 0h2m5 0h1m3 0h1m-39 1h1m2 0h2m1 0h1m6 0h1m2 0h1m7 0h4m6 0h1m3 0h1m-40 1h1m1 0h2m3 0h1m5 0h1m3 0h1m8 0h2m8 0h1m2 0h1m-40 1h2m6 0h1m4 0h1m3 0h1m6 0h6m6 0h1m1 0h1m-40 1h1m8 0h1m3 0h1m4 0h1m3 0h3m2 0h2m2 0h2m4 0h1m1 0h1m-41 1h4m6 0h1m3 0h1m4 0h1m1 0h2m4 0h1m1 0h1m4 0h2m2 0h1m1 0h1m-41 1h2m2 0h2m4 0h1m2 0h1m4 0h3m6 0h1m1 0h1m6 0h2m1 0h1m-41 1h1m1 0h1m4 0h1m3 0h1m2 0h1m2 0h2m1 0h1m6 0h1m3 0h1m7 0h2m-42 1h1m2 0h1m5 0h2m2 0h2m1 0h2m3 0h1m6 0h1m3 0h1m6 0h2m-41 1h1m3 0h1m6 0h5m6 0h1m4 0h1m4 0h1m4 0h2m1 0h1m-42 1h1m4 0h1m7 0h2m8 0h1m4 0h1m4 0h1m2 0h2m2 0h1m-41 1h1m4 0h1m4 0h7m6 0h1m3 0h1m5 0h3m4 0h1m-42 1h1m5 0h1m1 0h3m3 0h2m2 0h1m5 0h1m3 0h1m5 0h1m5 0h1m-42 1h1m4 0h4m5 0h1m1 0h1m3 0h1m4 0h1m2 0h1m4 0h3m5 0h1m-42 1h5m2 0h1m5 0h1m2 0h1m4 0h2m2 0h1m2 0h1m2 0h2m2 0h1m4 0h1m-42 1h2m6 0h1m5 0h1m2 0h1m6 0h1m2 0h2m1 0h2m4 0h1m4 0h1m-43 1h3m6 0h1m4 0h1m3 0h1m7 0h5m6 0h1m3 0h1m-43 1h1m1 0h1m1 0h1m5 0h1m3 0h1m4 0h1m8 0h2m8 0h1m2 0h1m-43 1h1m2 0h1m2 0h1m4 0h1m2 0h1m5 0h1m5 0h7m6 0h1m2 0h1m-44 1h1m3 0h1m3 0h1m3 0h1m2 0h1m5 0h1m1 0h4m2 0h1m1 0h1m2 0h1m5 0h1m1 0h1m-44 1h1m3 0h1m5 0h1m2 0h1m1 0h1m5 0h3m6 0h1m1 0h1m3 0h2m3 0h1m1 0h1m-44 1h1m3 0h1m6 0h1m1 0h2m3 0h3m1 0h1m6 0h1m2 0h1m5 0h1m2 0h2m-44 1h1m4 0h1m7 0h6m4 0h1m5 0h1m2 0h1m7 0h4m-45 1h1m5 0h1m6 0h4m7 0h1m4 0h1m3 0h1m8 0h2m-45 1h1m6 0h1m2 0h4m1 0h3m7 0h1m4 0h1m3 0h1m6 0h3m-45 1h1m3 0h7m4 0h1m1 0h1m1 0h2m5 0h1m3 0h1m4 0h1m3 0h3m1 0h1m-45 1h5m4 0h1m6 0h1m1 0h1m3 0h1m4 0h1m2 0h1m5 0h1m1 0h2m4 0h1m-46 1h3m7 0h1m5 0h1m2 0h1m4 0h1m3 0h1m1 0h1m5 0h3m5 0h1m-46 1h1m1 0h1m1 0h1m6 0h1m4 0h1m2 0h1m6 0h2m1 0h1m1 0h1m2 0h3m1 0h1m5 0h1m-46 1h1m2 0h1m2 0h1m5 0h1m3 0h1m3 0h1m8 0h6m4 0h1m4 0h1m-47 1h2m3 0h1m3 0h1m4 0h1m2 0h1m4 0h1m8 0h3m7 0h1m4 0h1m-48 1h1m4 0h1m4 0h1m3 0h1m2 0h1m5 0h1m5 0h6m7 0h1m3 0h1m-48 1h1m5 0h1m5 0h1m2 0h1m2 0h1m5 0h1m1 0h4m2 0h1m1 0h1m1 0h1m6 0h1m2 0h1m-48 1h1m6 0h1m6 0h1m1 0h1m1 0h1m4 0h4m5 0h1m1 0h1m3 0h1m4 0h1m2 0h1m-48 1h1m7 0h1m7 0h3m1 0h4m2 0h1m5 0h1m2 0h1m4 0h2m2 0h1m1 0h1m-48 1h21m6 0h1m4 0h1m3 0h1m6 0h1m1 0h1m1 0h1m-50 1h4m7 0h1m7 0h3m6 0h1m4 0h1m4 0h1m7 0h3m-51 1h2m1 0h1m2 0h1m6 0h1m5 0h2m1 0h1m1 0h1m5 0h1m4 0h1m4 0h1m7 0h2m-51 1h1m3 0h1m2 0h1m5 0h1m5 0h1m2 0h1m3 0h1m4 0h1m3 0h1m4 0h1m5 0h4m-52 1h2m4 0h1m3 0h1m4 0h1m4 0h1m3 0h1m4 0h1m3 0h1m2 0h1m5 0h1m1 0h4m2 0h1m-53 1h2m6 0h1m4 0h1m3 0h1m3 0h1m4 0h1m4 0h1m3 0h1m1 0h1m5 0h3m5 0h1m-54 1h5m4 0h1m6 0h1m2 0h1m2 0h1m5 0h1m5 0h1m1 0h1m1 0h1m2 0h4m1 0h1m6 0h1m-56 1h4m3 0h7m4 0h1m1 0h1m1 0h2m5 0h1m7 0h6m5 0h1m5 0h1m-57 1h2m2 0h1m1 0h1m6 0h1m2 0h4m1 0h3m7 0h1m4 0h6m7 0h1m5 0h1m-59 1h3m3 0h1m2 0h1m5 0h1m7 0h16m3 0h3m7 0h1m4 0h1m-60 1h2m5 0h1m4 0h1m4 0h1m7 0h2m1 0h1m7 0h1m5 0h2m1 0h1m1 0h1m6 0h1m3 0h1m-61 1h2m7 0h1m4 0h1m3 0h1m6 0h2m1 0h1m1 0h1m6 0h1m5 0h1m2 0h1m3 0h1m5 0h1m2 0h1m-64 1h5m7 0h1m5 0h1m3 0h1m4 0h2m2 0h1m3 0h1m5 0h1m4 0h1m3 0h1m4 0h1m4 0h1m1 0h1m-67 1h4m1 0h2m2 0h4m3 0h1m6 0h1m1 0h1m3 0h2m4 0h1m4 0h1m4 0h1m3 0h1m4 0h1m5 0h1m3 0h1m1 0h1m-71 1h4m5 0h1m1 0h1m5 0h5m5 0h1m1 0h1m1 0h2m5 0h1m5 0h1m3 0h1m3 0h1m5 0h1m6 0h1m1 0h1m1 0h1m-79 1h9m8 0h1m2 0h1m6 0h1m3 0h4m2 0h3m7 0h1m6 0h1m2 0h1m1 0h2m5 0h1m8 0h3m-566 1h488m6 0h4m7 0h1m3 0h1m5 0h1m7 0h7m4 0h1m8 0h1m1 0h2m7 0h1m5 0h5m-565 1h2m12 0h3m11 0h3m12 0h3m11 0h3m12 0h3m11 0h3m12 0h3m12 0h3m11 0h3m12 0h3m11 0h3m12 0h3m12 0h3m11 0h3m12 0h3m11 0h3m12 0h3m11 0h3m12 0h3m12 0h3m11 0h3m12 0h3m11 0h3m12 0h3m12 0h3m11 0h3m12 0h3m11 0h3m12 0h3m11 0h3m12 0h3m12 0h3m11 0h4m9 0h1m1 0h1m2 0h2m4 0h1m4 0h1m4 0h1m7 0h3m1 0h1m3 0h10m3 0h3m3 0h11m3 0h1m-564 1h1m1 0h1m9 0h2m1 0h1m1 0h1m9 0h1m1 0h1m1 0h1m9 0h2m1 0h1m1 0h1m9 0h1m1 0h1m1 0h2m9 0h1m1 0h1m1 0h1m9 0h1m1 0h1m1 0h2m9 0h1m1 0h1m1 0h1m9 0h2m1 0h1m1 0h1m9 0h1m1 0h1m1 0h2m9 0h1m1 0h1m1 0h1m9 0h1m1 0h1m1 0h2m9 0h1m1 0h1m1 0h1m9 0h2m1 0h1m1 0h1m9 0h1m1 0h1m1 0h1m9 0h2m1 0h1m1 0h1m9 0h1m1 0h1m1 0h2m9 0h1m1 0h1m1 0h1m9 0h1m1 0h1m1 0h2m9 0h1m1 0h1m1 0h1m9 0h2m1 0h1m1 0h1m9 0h1m1 0h1m1 0h1m9 0h2m1 0h1m1 0h1m9 0h1m1 0h1m1 0h2m9 0h1m1 0h1m1 0h1m9 0h2m1 0h1m1 0h1m9 0h1m1 0h1m1 0h1m9 0h2m1 0h1m1 0h1m9 0h1m1 0h1m1 0h2m9 0h1m1 0h1m1 0h1m9 0h1m1 0h1m1 0h2m9 0h1m1 0h1m1 0h1m9 0h2m1 0h1m1 0h1m9 0h1m1 0h1m2 0h1m7 0h1m3 0h1m3 0h2m2 0h1m4 0h1m4 0h1m5 0h2m2 0h1m1 0h1m7 0h1m5 0h9m5 0h1m6 0h2m-563 1h1m2 0h2m6 0h1m3 0h1m2 0h2m5 0h2m2 0h1m2 0h2m6 0h1m3 0h1m2 0h2m5 0h2m2 0h1m3 0h1m6 0h2m2 0h1m2 0h2m5 0h2m2 0h1m3 0h1m6 0h2m2 0h1m2 0h2m6 0h1m3 0h1m2 0h2m5 0h2m2 0h1m3 0h1m6 0h2m2 0h1m2 0h2m5 0h2m2 0h1m3 0h1m6 0h2m2 0h1m2 0h2m6 0h1m3 0h1m2 0h2m5 0h2m2 0h1m2 0h2m6 0h1m3 0h1m2 0h2m5 0h2m2 0h1m3 0h1m6 0h2m2 0h1m2 0h2m5 0h2m2 0h1m3 0h1m6 0h2m2 0h1m2 0h2m6 0h1m3 0h1m2 0h2m5 0h2m2 0h1m2 0h2m6 0h1m3 0h1m2 0h2m5 0h2m2 0h1m3 0h1m6 0h2m2 0h1m2 0h2m6 0h1m3 0h1m2 0h2m5 0h2m2 0h1m2 0h2m6 0h1m3 0h1m2 0h2m5 0h2m2 0h1m3 0h1m6 0h2m2 0h1m2 0h2m5 0h2m2 0h1m3 0h1m6 0h2m2 0h1m2 0h2m6 0h1m3 0h1m2 0h2m5 0h2m2 0h1m3 0h2m4 0h1m4 0h1m5 0h3m5 0h1m2 0h1m3 0h3m3 0h1m3 0h1m5 0h1m8 0h2m1 0h1m7 0h1m6 0h1m-561 1h1m4 0h1m4 0h1m4 0h1m4 0h1m3 0h1m4 0h1m4 0h1m4 0h1m4 0h1m4 0h1m3 0h1m4 0h1m4 0h1m4 0h1m4 0h1m4 0h1m3 0h1m4 0h1m4 0h1m4 0h1m4 0h1m4 0h1m4 0h1m4 0h1m4 0h1m3 0h1m4 0h1m4 0h1m4 0h1m4 0h1m4 0h1m3 0h1m4 0h1m4 0h1m4 0h1m4 0h1m4 0h1m4 0h1m4 0h1m4 0h1m3 0h1m4 0h1m4 0h1m4 0h1m4 0h1m4 0h1m3 0h1m4 0h1m4 0h1m4 0h1m4 0h1m4 0h1m3 0h1m4 0h1m4 0h1m4 0h1m4 0h1m4 0h1m4 0h1m4 0h1m4 0h1m3 0h1m4 0h1m4 0h1m4 0h1m4 0h1m4 0h1m3 0h1m4 0h1m4 0h1m4 0h1m4 0h1m4 0h1m4 0h1m4 0h1m4 0h1m3 0h1m4 0h1m4 0h1m4 0h1m4 0h1m4 0h1m3 0h1m4 0h1m4 0h1m4 0h1m4 0h1m4 0h1m3 0h1m4 0h1m4 0h1m4 0h1m4 0h1m4 0h1m4 0h1m4 0h1m4 0h1m3 0h1m4 0h1m5 0h2m1 0h1m5 0h1m5 0h1m2 0h3m2 0h1m1 0h1m2 0h2m5 0h1m4 0h1m5 0h1m6 0h2m1 0h1m1 0h1m7 0h1m5 0h1m-560 1h1m5 0h1m1 0h2m5 0h1m5 0h1m1 0h1m5 0h1m5 0h1m1 0h2m5 0h1m5 0h1m1 0h1m5 0h1m5 0h2m1 0h1m5 0h1m5 0h1m1 0h1m5 0h1m5 0h2m1 0h1m5 0h1m5 0h1m1 0h2m5 0h1m5 0h1m1 0h1m5 0h1m5 0h2m1 0h1m5 0h1m5 0h1m1 0h1m5 0h1m5 0h2m1 0h1m5 0h1m5 0h1m1 0h2m5 0h1m5 0h1m1 0h1m5 0h1m5 0h1m1 0h2m5 0h1m5 0h1m1 0h1m5 0h1m5 0h2m1 0h1m5 0h1m5 0h1m1 0h1m5 0h1m5 0h2m1 0h1m5 0h1m5 0h1m1 0h2m5 0h1m5 0h1m1 0h1m5 0h1m5 0h1m1 0h2m5 0h1m5 0h1m1 0h1m5 0h1m5 0h2m1 0h1m5 0h1m5 0h1m1 0h2m5 0h1m5 0h1m1 0h1m5 0h1m5 0h1m1 0h2m5 0h1m5 0h1m1 0h1m5 0h1m5 0h2m1 0h1m5 0h1m5 0h1m1 0h1m5 0h1m5 0h2m1 0h1m5 0h1m5 0h1m1 0h2m5 0h1m5 0h1m1 0h1m5 0h1m7 0h1m6 0h1m4 0h1m6 0h2m1 0h4m7 0h1m5 0h1m3 0h1m5 0h2m2 0h1m3 0h1m5 0h1m4 0h2m-559 1h1m6 0h1m7 0h1m6 0h1m6 0h1m6 0h1m7 0h1m6 0h1m6 0h1m7 0h1m6 0h1m6 0h1m6 0h1m7 0h1m6 0h1m6 0h1m7 0h1m6 0h1m6 0h1m7 0h1m6 0h1m6 0h1m6 0h1m7 0h1m6 0h1m6 0h1m7 0h1m6 0h1m6 0h1m6 0h1m7 0h1m6 0h1m6 0h1m7 0h1m6 0h1m6 0h1m6 0h1m7 0h1m6 0h1m6 0h1m7 0h1m6 0h1m6 0h1m6 0h1m7 0h1m6 0h1m6 0h1m7 0h1m6 0h1m6 0h1m7 0h1m6 0h1m6 0h1m6 0h1m7 0h1m6 0h1m6 0h1m7 0h1m6 0h1m6 0h1m6 0h1m7 0h1m6 0h1m6 0h1m7 0h1m6 0h1m7 0h1m5 0h1m1 0h2m4 0h1m3 0h1m9 0h4m7 0h1m6 0h1m3 0h1m4 0h1m4 0h1m4 0h1m4 0h1m3 0h1m-557 1h1m5 0h1m1 0h2m5 0h1m5 0h1m1 0h1m5 0h1m5 0h1m1 0h2m5 0h1m5 0h1m1 0h1m5 0h1m5 0h2m1 0h1m5 0h1m5 0h1m1 0h1m5 0h1m5 0h2m1 0h1m5 0h1m5 0h1m1 0h2m5 0h1m5 0h1m1 0h1m5 0h1m5 0h2m1 0h1m5 0h1m5 0h1m1 0h1m5 0h1m5 0h2m1 0h1m5 0h1m5 0h1m1 0h2m5 0h1m5 0h1m1 0h1m5 0h1m5 0h1m1 0h2m5 0h1m5 0h1m1 0h1m5 0h1m5 0h2m1 0h1m5 0h1m5 0h1m1 0h1m5 0h1m5 0h2m1 0h1m5 0h1m5 0h1m1 0h2m5 0h1m5 0h1m1 0h1m5 0h1m5 0h1m1 0h2m5 0h1m5 0h1m1 0h1m5 0h1m5 0h2m1 0h1m5 0h1m5 0h1m1 0h2m5 0h1m5 0h1m1 0h1m5 0h1m5 0h1m1 0h2m5 0h1m5 0h1m1 0h1m5 0h1m5 0h2m1 0h1m5 0h1m5 0h1m1 0h1m5 0h1m5 0h2m1 0h1m5 0h1m5 0h1m1 0h2m5 0h1m5 0h1m1 0h2m5 0h1m4 0h1m4 0h2m2 0h1m3 0h1m5 0h6m2 0h4m3 0h1m7 0h1m1 0h1m3 0h2m4 0h1m5 0h1m4 0h1m2 0h1m-556 1h1m4 0h1m4 0h1m4 0h1m4 0h1m3 0h1m4 0h1m4 0h1m4 0h1m4 0h1m4 0h1m3 0h1m4 0h1m4 0h1m4 0h1m4 0h1m4 0h1m3 0h1m4 0h1m4 0h1m4 0h1m4 0h1m4 0h1m4 0h1m4 0h1m4 0h1m3 0h1m4 0h1m4 0h1m4 0h1m4 0h1m4 0h1m3 0h1m4 0h1m4 0h1m4 0h1m4 0h1m4 0h1m4 0h1m4 0h1m4 0h1m3 0h1m4 0h1m4 0h1m4 0h1m4 0h1m4 0h1m3 0h1m4 0h1m4 0h1m4 0h1m4 0h1m4 0h1m3 0h1m4 0h1m4 0h1m4 0h1m4 0h1m4 0h1m4 0h1m4 0h1m4 0h1m3 0h1m4 0h1m4 0h1m4 0h1m4 0h1m4 0h1m3 0h1m4 0h1m4 0h1m4 0h1m4 0h1m4 0h1m4 0h1m4 0h1m4 0h1m3 0h1m4 0h1m4 0h1m4 0h1m4 0h1m4 0h1m3 0h1m4 0h1m4 0h1m4 0h1m4 0h1m4 0h1m3 0h1m4 0h1m4 0h1m4 0h1m4 0h1m4 0h1m4 0h1m4 0h1m4 0h1m4 0h1m4 0h1m3 0h1m7 0h1m2 0h1m1 0h1m3 0h3m3 0h1m2 0h1m5 0h5m6 0h1m1 0h1m1 0h2m6 0h1m6 0h1m2 0h1m2 0h1m-555 1h1m2 0h2m6 0h1m3 0h1m2 0h2m5 0h2m2 0h1m2 0h2m6 0h1m3 0h1m2 0h2m5 0h2m2 0h1m3 0h1m6 0h2m2 0h1m2 0h2m5 0h2m2 0h1m3 0h1m6 0h2m2 0h1m2 0h2m6 0h1m3 0h1m2 0h2m5 0h2m2 0h1m3 0h1m6 0h2m2 0h1m2 0h2m5 0h2m2 0h1m3 0h1m6 0h2m2 0h1m2 0h2m6 0h1m3 0h1m2 0h2m5 0h2m2 0h1m2 0h2m6 0h1m3 0h1m2 0h2m5 0h2m2 0h1m3 0h1m6 0h2m2 0h1m2 0h2m5 0h2m2 0h1m3 0h1m6 0h2m2 0h1m2 0h2m6 0h1m3 0h1m2 0h2m5 0h2m2 0h1m2 0h2m6 0h1m3 0h1m2 0h2m5 0h2m2 0h1m3 0h1m6 0h2m2 0h1m2 0h2m6 0h1m3 0h1m2 0h2m5 0h2m2 0h1m2 0h2m6 0h1m3 0h1m2 0h2m5 0h2m2 0h1m3 0h1m6 0h2m2 0h1m2 0h2m5 0h2m2 0h1m3 0h1m6 0h2m2 0h1m2 0h2m6 0h1m3 0h1m2 0h2m6 0h1m3 0h1m2 0h1m9 0h8m6 0h1m2 0h1m6 0h1m3 0h5m2 0h3m7 0h1m8 0h1m1 0h3m-554 1h1m1 0h1m9 0h2m1 0h1m1 0h1m9 0h1m1 0h1m1 0h1m9 0h2m1 0h1m1 0h1m9 0h1m1 0h1m1 0h2m9 0h1m1 0h1m1 0h1m9 0h1m1 0h1m1 0h2m9 0h1m1 0h1m1 0h1m9 0h2m1 0h1m1 0h1m9 0h1m1 0h1m1 0h2m9 0h1m1 0h1m1 0h1m9 0h1m1 0h1m1 0h2m9 0h1m1 0h1m1 0h1m9 0h2m1 0h1m1 0h1m9 0h1m1 0h1m1 0h1m9 0h2m1 0h1m1 0h1m9 0h1m1 0h1m1 0h2m9 0h1m1 0h1m1 0h1m9 0h1m1 0h1m1 0h2m9 0h1m1 0h1m1 0h1m9 0h2m1 0h1m1 0h1m9 0h1m1 0h1m1 0h1m9 0h2m1 0h1m1 0h1m9 0h1m1 0h1m1 0h2m9 0h1m1 0h1m1 0h1m9 0h2m1 0h1m1 0h1m9 0h1m1 0h1m1 0h1m9 0h2m1 0h1m1 0h1m9 0h1m1 0h1m1 0h2m9 0h1m1 0h1m1 0h1m9 0h1m1 0h1m1 0h2m9 0h1m1 0h1m1 0h1m9 0h2m1 0h1m1 0h1m9 0h2m1 0h1m1 0h1m9 0h5m9 0h1m3 0h1m6 0h1m8 0h7m5 0h1m8 0h3m-552 1h2m12 0h3m11 0h3m12 0h3m11 0h3m12 0h3m11 0h3m12 0h3m12 0h3m11 0h3m12 0h3m11 0h3m12 0h3m12 0h3m11 0h3m12 0h3m11 0h3m12 0h3m11 0h3m12 0h3m12 0h3m11 0h3m12 0h3m11 0h3m12 0h3m12 0h3m11 0h3m12 0h3m11 0h3m12 0h3m11 0h3m12 0h3m12 0h3m12 0h3m2 0h8m2 0h4m7 0h1m4 0h1m5 0h1m8 0h4m4 0h16m-551 1h486m9 0h1m1 0h1m2 0h2m4 0h1m6 0h1m3 0h1m7 0h2m1 0h1m2 0h1m6 0h1m9 0h2m-550 1h2m12 0h3m11 0h3m12 0h3m11 0h3m12 0h3m11 0h3m12 0h3m12 0h3m11 0h3m12 0h3m11 0h3m12 0h3m12 0h3m11 0h3m12 0h3m11 0h3m12 0h3m11 0h3m12 0h3m12 0h3m11 0h3m12 0h3m11 0h3m12 0h3m12 0h3m11 0h3m12 0h3m11 0h3m12 0h3m11 0h3m12 0h3m12 0h3m12 0h4m9 0h1m3 0h1m3 0h2m2 0h1m6 0h1m3 0h1m4 0h3m3 0h1m2 0h1m6 0h1m7 0h2m-548 1h1m1 0h1m10 0h1m1 0h1m1 0h1m9 0h1m1 0h1m1 0h1m10 0h1m1 0h1m1 0h1m9 0h1m1 0h1m1 0h1m10 0h1m1 0h1m1 0h1m9 0h1m1 0h1m1 0h1m10 0h1m1 0h1m1 0h1m10 0h1m1 0h1m1 0h1m9 0h1m1 0h1m1 0h1m10 0h1m1 0h1m1 0h1m9 0h1m1 0h1m1 0h1m10 0h1m1 0h1m1 0h1m10 0h1m1 0h1m1 0h1m9 0h1m1 0h1m1 0h1m10 0h1m1 0h1m1 0h1m9 0h1m1 0h1m1 0h1m10 0h1m1 0h1m1 0h1m9 0h1m1 0h1m1 0h1m10 0h1m1 0h1m1 0h1m10 0h1m1 0h1m1 0h1m9 0h1m1 0h1m1 0h1m10 0h1m1 0h1m1 0h1m9 0h1m1 0h1m1 0h1m10 0h1m1 0h1m1 0h1m10 0h1m1 0h1m1 0h1m9 0h1m1 0h1m1 0h1m10 0h1m1 0h1m1 0h1m9 0h1m1 0h1m1 0h1m10 0h1m1 0h1m1 0h1m9 0h1m1 0h1m1 0h1m10 0h1m1 0h1m1 0h1m9 0h2m1 0h1m1 0h1m9 0h2m1 0h1m2 0h1m7 0h1m4 0h1m5 0h3m6 0h1m2 0h1m3 0h2m5 0h1m4 0h1m4 0h1m6 0h2m-546 1h1m2 0h1m8 0h1m2 0h1m2 0h1m7 0h1m2 0h1m2 0h1m8 0h1m2 0h1m2 0h1m7 0h1m2 0h1m2 0h1m8 0h1m2 0h1m2 0h1m7 0h1m2 0h1m2 0h1m8 0h1m2 0h1m2 0h1m8 0h1m2 0h1m2 0h1m7 0h1m2 0h1m2 0h1m8 0h1m2 0h1m2 0h1m7 0h1m2 0h1m2 0h1m8 0h1m2 0h1m2 0h1m8 0h1m2 0h1m2 0h1m7 0h1m2 0h1m2 0h1m8 0h1m2 0h1m2 0h1m7 0h1m2 0h1m2 0h1m8 0h1m2 0h1m2 0h1m7 0h1m2 0h1m2 0h1m8 0h1m2 0h1m2 0h1m8 0h1m2 0h1m2 0h1m7 0h1m2 0h1m2 0h1m8 0h1m2 0h1m2 0h1m7 0h1m2 0h1m2 0h1m8 0h1m2 0h1m2 0h1m8 0h1m2 0h1m2 0h1m7 0h1m2 0h1m2 0h1m8 0h1m2 0h1m2 0h1m7 0h1m2 0h1m2 0h1m8 0h1m2 0h1m2 0h1m7 0h1m2 0h1m2 0h1m8 0h1m2 0h1m2 0h2m6 0h1m3 0h1m2 0h2m6 0h1m3 0h1m3 0h2m4 0h1m5 0h1m5 0h1m2 0h3m3 0h1m1 0h1m2 0h2m6 0h1m5 0h1m4 0h1m4 0h2m-544 1h1m3 0h1m5 0h2m3 0h1m3 0h1m5 0h1m3 0h1m3 0h1m5 0h2m3 0h1m3 0h1m5 0h1m3 0h1m3 0h2m5 0h1m3 0h1m3 0h1m5 0h1m3 0h1m3 0h2m5 0h1m3 0h1m3 0h1m5 0h2m3 0h1m3 0h1m5 0h1m3 0h1m3 0h2m5 0h1m3 0h1m3 0h1m5 0h1m3 0h1m3 0h2m5 0h1m3 0h1m3 0h1m5 0h2m3 0h1m3 0h1m5 0h1m3 0h1m3 0h1m5 0h2m3 0h1m3 0h1m5 0h1m3 0h1m3 0h2m5 0h1m3 0h1m3 0h1m5 0h1m3 0h1m3 0h2m5 0h1m3 0h1m3 0h1m5 0h2m3 0h1m3 0h1m5 0h1m3 0h1m3 0h1m5 0h2m3 0h1m3 0h1m5 0h1m3 0h1m3 0h2m5 0h1m3 0h1m3 0h1m5 0h2m3 0h1m3 0h1m5 0h1m3 0h1m3 0h1m5 0h2m3 0h1m3 0h1m5 0h1m3 0h1m3 0h2m5 0h1m3 0h1m3 0h1m5 0h1m3 0h1m3 0h2m5 0h1m3 0h1m4 0h1m4 0h1m4 0h1m4 0h1m4 0h1m4 0h1m5 0h2m1 0h1m6 0h1m4 0h1m6 0h3m1 0h4m7 0h1m6 0h1m3 0h1m4 0h1m-542 1h1m4 0h1m3 0h1m5 0h1m4 0h1m3 0h1m4 0h1m4 0h1m3 0h1m5 0h1m4 0h1m3 0h1m4 0h1m5 0h1m3 0h1m4 0h1m4 0h1m3 0h1m4 0h1m5 0h1m3 0h1m4 0h1m4 0h1m3 0h1m5 0h1m4 0h1m3 0h1m4 0h1m5 0h1m3 0h1m4 0h1m4 0h1m3 0h1m4 0h1m5 0h1m3 0h1m4 0h1m4 0h1m3 0h1m5 0h1m4 0h1m3 0h1m4 0h1m4 0h1m3 0h1m5 0h1m4 0h1m3 0h1m4 0h1m5 0h1m3 0h1m4 0h1m4 0h1m3 0h1m4 0h1m5 0h1m3 0h1m4 0h1m4 0h1m3 0h1m5 0h1m4 0h1m3 0h1m4 0h1m4 0h1m3 0h1m5 0h1m4 0h1m3 0h1m4 0h1m5 0h1m3 0h1m4 0h1m4 0h1m3 0h1m5 0h1m4 0h1m3 0h1m4 0h1m4 0h1m3 0h1m5 0h1m4 0h1m3 0h1m4 0h1m5 0h1m3 0h1m4 0h1m4 0h1m3 0h1m4 0h1m5 0h1m3 0h1m4 0h1m5 0h1m1 0h2m5 0h1m5 0h1m1 0h2m5 0h1m7 0h2m6 0h1m3 0h1m10 0h6m6 0h1m7 0h1m2 0h1m2 0h2m-541 1h1m5 0h1m1 0h1m6 0h1m5 0h1m1 0h1m5 0h1m5 0h1m1 0h1m6 0h1m5 0h1m1 0h1m5 0h1m6 0h1m1 0h1m5 0h1m5 0h1m1 0h1m5 0h1m6 0h1m1 0h1m5 0h1m5 0h1m1 0h1m6 0h1m5 0h1m1 0h1m5 0h1m6 0h1m1 0h1m5 0h1m5 0h1m1 0h1m5 0h1m6 0h1m1 0h1m5 0h1m5 0h1m1 0h1m6 0h1m5 0h1m1 0h1m5 0h1m5 0h1m1 0h1m6 0h1m5 0h1m1 0h1m5 0h1m6 0h1m1 0h1m5 0h1m5 0h1m1 0h1m5 0h1m6 0h1m1 0h1m5 0h1m5 0h1m1 0h1m6 0h1m5 0h1m1 0h1m5 0h1m5 0h1m1 0h1m6 0h1m5 0h1m1 0h1m5 0h1m6 0h1m1 0h1m5 0h1m5 0h1m1 0h1m6 0h1m5 0h1m1 0h1m5 0h1m5 0h1m1 0h1m6 0h1m5 0h1m1 0h1m5 0h1m6 0h1m1 0h1m5 0h1m5 0h1m1 0h1m5 0h1m6 0h1m1 0h1m5 0h1m6 0h1m7 0h1m6 0h1m7 0h1m5 0h2m2 0h2m4 0h1m3 0h1m6 0h6m4 0h8m6 0h1m1 0h1m1 0h2m-539 1h1m6 0h1m7 0h1m6 0h1m6 0h1m6 0h1m7 0h1m6 0h1m6 0h1m7 0h1m6 0h1m6 0h1m6 0h1m7 0h1m6 0h1m6 0h1m7 0h1m6 0h1m6 0h1m7 0h1m6 0h1m6 0h1m6 0h1m7 0h1m6 0h1m6 0h1m7 0h1m6 0h1m6 0h1m6 0h1m7 0h1m6 0h1m6 0h1m7 0h1m6 0h1m6 0h1m6 0h1m7 0h1m6 0h1m6 0h1m7 0h1m6 0h1m6 0h1m6 0h1m7 0h1m6 0h1m6 0h1m7 0h1m6 0h1m6 0h1m7 0h1m6 0h1m6 0h1m6 0h1m7 0h1m6 0h1m6 0h1m7 0h1m6 0h1m6 0h1m6 0h1m7 0h1m6 0h1m5 0h1m1 0h2m5 0h1m5 0h1m1 0h2m5 0h1m4 0h1m6 0h2m3 0h1m1 0h1m3 0h4m3 0h1m2 0h1m7 0h1m3 0h5m2 0h3m-537 1h1m5 0h1m1 0h2m5 0h1m5 0h1m1 0h1m5 0h1m5 0h1m1 0h2m5 0h1m5 0h1m1 0h1m5 0h1m5 0h2m1 0h1m5 0h1m5 0h1m1 0h1m5 0h1m5 0h2m1 0h1m5 0h1m5 0h1m1 0h2m5 0h1m5 0h1m1 0h1m5 0h1m5 0h2m1 0h1m5 0h1m5 0h1m1 0h1m5 0h1m5 0h2m1 0h1m5 0h1m5 0h1m1 0h2m5 0h1m5 0h1m1 0h1m5 0h1m5 0h1m1 0h2m5 0h1m5 0h1m1 0h1m5 0h1m5 0h2m1 0h1m5 0h1m5 0h1m1 0h1m5 0h1m5 0h2m1 0h1m5 0h1m5 0h1m1 0h2m5 0h1m5 0h1m1 0h1m5 0h1m5 0h1m1 0h2m5 0h1m5 0h1m1 0h1m5 0h1m5 0h2m1 0h1m5 0h1m5 0h1m1 0h2m5 0h1m5 0h1m1 0h1m5 0h1m5 0h1m1 0h2m5 0h1m5 0h1m1 0h1m5 0h1m5 0h2m1 0h1m5 0h1m5 0h1m1 0h1m5 0h1m5 0h2m1 0h1m5 0h1m4 0h1m4 0h1m4 0h1m4 0h1m4 0h2m3 0h1m3 0h1m9 0h2m1 0h6m6 0h1m3 0h1m7 0h1m8 0h3m-535 1h1m4 0h1m4 0h1m4 0h1m4 0h1m3 0h1m4 0h1m4 0h1m4 0h1m4 0h1m4 0h1m3 0h1m4 0h1m4 0h1m4 0h1m4 0h1m4 0h1m3 0h1m4 0h1m4 0h1m4 0h1m4 0h1m4 0h1m4 0h1m4 0h1m4 0h1m3 0h1m4 0h1m4 0h1m4 0h1m4 0h1m4 0h1m3 0h1m4 0h1m4 0h1m4 0h1m4 0h1m4 0h1m4 0h1m4 0h1m4 0h1m3 0h1m4 0h1m4 0h1m4 0h1m4 0h1m4 0h1m3 0h1m4 0h1m4 0h1m4 0h1m4 0h1m4 0h1m3 0h1m4 0h1m4 0h1m4 0h1m4 0h1m4 0h1m4 0h1m4 0h1m4 0h1m3 0h1m4 0h1m4 0h1m4 0h1m4 0h1m4 0h1m3 0h1m4 0h1m4 0h1m4 0h1m4 0h1m4 0h1m4 0h1m4 0h1m4 0h1m3 0h1m4 0h1m4 0h1m4 0h1m4 0h1m4 0h1m3 0h1m4 0h1m4 0h1m4 0h1m4 0h1m4 0h1m3 0h1m4 0h1m4 0h1m4 0h1m4 0h1m3 0h1m6 0h1m3 0h1m2 0h2m7 0h1m2 0h1m1 0h2m9 0h6m9 0h1m4 0h1m6 0h1m8 0h2m-533 1h1m2 0h2m6 0h1m3 0h1m2 0h2m5 0h2m2 0h1m2 0h2m6 0h1m3 0h1m2 0h2m5 0h2m2 0h1m3 0h1m6 0h2m2 0h1m2 0h2m5 0h2m2 0h1m3 0h1m6 0h2m2 0h1m2 0h2m6 0h1m3 0h1m2 0h2m5 0h2m2 0h1m3 0h1m6 0h2m2 0h1m2 0h2m5 0h2m2 0h1m3 0h1m6 0h2m2 0h1m2 0h2m6 0h1m3 0h1m2 0h2m5 0h2m2 0h1m2 0h2m6 0h1m3 0h1m2 0h2m5 0h2m2 0h1m3 0h1m6 0h2m2 0h1m2 0h2m5 0h2m2 0h1m3 0h1m6 0h2m2 0h1m2 0h2m6 0h1m3 0h1m2 0h2m5 0h2m2 0h1m2 0h2m6 0h1m3 0h1m2 0h2m5 0h2m2 0h1m3 0h1m6 0h2m2 0h1m2 0h2m6 0h1m3 0h1m2 0h2m5 0h2m2 0h1m2 0h2m6 0h1m3 0h1m2 0h2m5 0h2m2 0h1m3 0h1m6 0h2m2 0h1m2 0h2m5 0h2m2 0h1m3 0h1m6 0h2m2 0h1m2 0h1m8 0h2m1 0h1m1 0h1m10 0h4m3 0h8m3 0h2m1 0h2m6 0h1m5 0h1m5 0h1m7 0h2m-531 1h1m1 0h1m9 0h2m1 0h1m1 0h1m9 0h1m1 0h1m1 0h1m9 0h2m1 0h1m1 0h1m9 0h1m1 0h1m1 0h2m9 0h1m1 0h1m1 0h1m9 0h1m1 0h1m1 0h2m9 0h1m1 0h1m1 0h1m9 0h2m1 0h1m1 0h1m9 0h1m1 0h1m1 0h2m9 0h1m1 0h1m1 0h1m9 0h1m1 0h1m1 0h2m9 0h1m1 0h1m1 0h1m9 0h2m1 0h1m1 0h1m9 0h1m1 0h1m1 0h1m9 0h2m1 0h1m1 0h1m9 0h1m1 0h1m1 0h2m9 0h1m1 0h1m1 0h1m9 0h1m1 0h1m1 0h2m9 0h1m1 0h1m1 0h1m9 0h2m1 0h1m1 0h1m9 0h1m1 0h1m1 0h1m9 0h2m1 0h1m1 0h1m9 0h1m1 0h1m1 0h2m9 0h1m1 0h1m1 0h1m9 0h2m1 0h1m1 0h1m9 0h1m1 0h1m1 0h1m9 0h2m1 0h1m1 0h1m9 0h1m1 0h1m1 0h2m9 0h1m1 0h1m1 0h1m9 0h1m1 0h1m1 0h2m9 0h1m1 0h1m1 0h1m11 0h3m6 0h12m10 0h1m1 0h1m3 0h3m2 0h1m7 0h1m4 0h1m5 0h2m-529 1h2m12 0h3m11 0h3m12 0h3m11 0h3m12 0h3m11 0h3m12 0h3m12 0h3m11 0h3m12 0h3m11 0h3m12 0h3m12 0h3m11 0h3m12 0h3m11 0h3m12 0h3m11 0h3m12 0h3m12 0h3m11 0h3m12 0h3m11 0h3m12 0h3m12 0h3m11 0h3m12 0h3m11 0h3m12 0h3m11 0h3m12 0h3m6 0h15m6 0h4m11 0h1m2 0h1m6 0h3m7 0h1m3 0h1m4 0h2m-527 1h460m6 0h3m11 0h1m1 0h1m2 0h2m7 0h2m3 0h1m6 0h1m2 0h2m5 0h1m2 0h1m3 0h2m-525 1h2m12 0h3m11 0h3m12 0h3m11 0h3m12 0h3m11 0h3m12 0h3m12 0h3m11 0h3m12 0h3m11 0h3m12 0h3m12 0h3m11 0h3m12 0h3m11 0h3m12 0h3m11 0h3m12 0h3m12 0h3m11 0h3m12 0h3m11 0h3m12 0h3m12 0h3m11 0h3m12 0h3m11 0h3m12 0h3m11 0h3m12 0h3m11 0h1m1 0h1m1 0h2m8 0h1m2 0h1m4 0h2m4 0h1m5 0h1m5 0h1m5 0h3m2 0h1m1 0h1m2 0h2m-523 1h1m1 0h1m9 0h2m1 0h1m1 0h1m9 0h1m1 0h1m1 0h1m9 0h2m1 0h1m1 0h1m9 0h1m1 0h1m1 0h2m9 0h1m1 0h1m1 0h1m9 0h1m1 0h1m1 0h2m9 0h1m1 0h1m1 0h1m9 0h2m1 0h1m1 0h1m9 0h1m1 0h1m1 0h2m9 0h1m1 0h1m1 0h1m9 0h1m1 0h1m1 0h2m9 0h1m1 0h1m1 0h1m9 0h2m1 0h1m1 0h1m9 0h1m1 0h1m1 0h1m9 0h2m1 0h1m1 0h1m9 0h1m1 0h1m1 0h2m9 0h1m1 0h1m1 0h1m9 0h1m1 0h1m1 0h2m9 0h1m1 0h1m1 0h1m9 0h2m1 0h1m1 0h1m9 0h1m1 0h1m1 0h1m9 0h2m1 0h1m1 0h1m9 0h1m1 0h1m1 0h2m9 0h1m1 0h1m1 0h1m9 0h2m1 0h1m1 0h1m9 0h1m1 0h1m1 0h1m9 0h2m1 0h1m1 0h1m9 0h1m1 0h1m1 0h2m9 0h1m1 0h1m1 0h1m9 0h1m1 0h1m1 0h2m9 0h1m1 0h1m1 0h1m9 0h1m2 0h1m3 0h1m6 0h1m3 0h1m6 0h2m1 0h1m7 0h1m3 0h1m9 0h2m1 0h4m-521 1h1m2 0h2m6 0h1m3 0h1m2 0h2m5 0h2m2 0h1m2 0h2m6 0h1m3 0h1m2 0h2m5 0h2m2 0h1m3 0h1m6 0h2m2 0h1m2 0h2m5 0h2m2 0h1m3 0h1m6 0h2m2 0h1m2 0h2m6 0h1m3 0h1m2 0h2m5 0h2m2 0h1m3 0h1m6 0h2m2 0h1m2 0h2m5 0h2m2 0h1m3 0h1m6 0h2m2 0h1m2 0h2m6 0h1m3 0h1m2 0h2m5 0h2m2 0h1m2 0h2m6 0h1m3 0h1m2 0h2m5 0h2m2 0h1m3 0h1m6 0h2m2 0h1m2 0h2m5 0h2m2 0h1m3 0h1m6 0h2m2 0h1m2 0h2m6 0h1m3 0h1m2 0h2m5 0h2m2 0h1m2 0h2m6 0h1m3 0h1m2 0h2m5 0h2m2 0h1m3 0h1m6 0h2m2 0h1m2 0h2m6 0h1m3 0h1m2 0h2m5 0h2m2 0h1m2 0h2m6 0h1m3 0h1m2 0h2m5 0h2m2 0h1m3 0h1m6 0h2m2 0h1m2 0h2m5 0h2m2 0h1m3 0h1m6 0h2m2 0h1m2 0h2m5 0h2m3 0h1m4 0h1m4 0h1m4 0h1m8 0h2m7 0h1m3 0h1m10 0h4m-519 1h1m4 0h1m4 0h1m4 0h1m4 0h1m3 0h1m4 0h1m4 0h1m4 0h1m4 0h1m4 0h1m3 0h1m4 0h1m4 0h1m4 0h1m4 0h1m4 0h1m3 0h1m4 0h1m4 0h1m4 0h1m4 0h1m4 0h1m4 0h1m4 0h1m4 0h1m3 0h1m4 0h1m4 0h1m4 0h1m4 0h1m4 0h1m3 0h1m4 0h1m4 0h1m4 0h1m4 0h1m4 0h1m4 0h1m4 0h1m4 0h1m3 0h1m4 0h1m4 0h1m4 0h1m4 0h1m4 0h1m3 0h1m4 0h1m4 0h1m4 0h1m4 0h1m4 0h1m3 0h1m4 0h1m4 0h1m4 0h1m4 0h1m4 0h1m4 0h1m4 0h1m4 0h1m3 0h1m4 0h1m4 0h1m4 0h1m4 0h1m4 0h1m3 0h1m4 0h1m4 0h1m4 0h1m4 0h1m4 0h1m4 0h1m4 0h1m4 0h1m3 0h1m4 0h1m4 0h1m4 0h1m4 0h1m4 0h1m3 0h1m4 0h1m4 0h1m4 0h1m4 0h1m4 0h1m3 0h1m4 0h1m4 0h1m4 0h1m4 0h1m4 0h1m3 0h1m5 0h1m5 0h2m1 0h1m6 0h1m6 0h1m2 0h2m5 0h1m2 0h1m7 0h4m-515 1h1m5 0h1m1 0h2m5 0h1m5 0h1m1 0h1m5 0h1m5 0h1m1 0h2m5 0h1m5 0h1m1 0h1m5 0h1m5 0h2m1 0h1m5 0h1m5 0h1m1 0h1m5 0h1m5 0h2m1 0h1m5 0h1m5 0h1m1 0h2m5 0h1m5 0h1m1 0h1m5 0h1m5 0h2m1 0h1m5 0h1m5 0h1m1 0h1m5 0h1m5 0h2m1 0h1m5 0h1m5 0h1m1 0h2m5 0h1m5 0h1m1 0h1m5 0h1m5 0h1m1 0h2m5 0h1m5 0h1m1 0h1m5 0h1m5 0h2m1 0h1m5 0h1m5 0h1m1 0h1m5 0h1m5 0h2m1 0h1m5 0h1m5 0h1m1 0h2m5 0h1m5 0h1m1 0h1m5 0h1m5 0h1m1 0h2m5 0h1m5 0h1m1 0h1m5 0h1m5 0h2m1 0h1m5 0h1m5 0h1m1 0h2m5 0h1m5 0h1m1 0h1m5 0h1m5 0h1m1 0h2m5 0h1m5 0h1m1 0h1m5 0h1m5 0h2m1 0h1m5 0h1m5 0h1m1 0h1m5 0h1m5 0h2m1 0h1m5 0h1m5 0h1m1 0h1m6 0h1m7 0h1m7 0h1m5 0h1m5 0h2m3 0h1m1 0h1m4 0h4m-511 1h1m6 0h1m7 0h1m6 0h1m6 0h1m6 0h1m7 0h1m6 0h1m6 0h1m7 0h1m6 0h1m6 0h1m6 0h1m7 0h1m6 0h1m6 0h1m7 0h1m6 0h1m6 0h1m7 0h1m6 0h1m6 0h1m6 0h1m7 0h1m6 0h1m6 0h1m7 0h1m6 0h1m6 0h1m6 0h1m7 0h1m6 0h1m6 0h1m7 0h1m6 0h1m6 0h1m6 0h1m7 0h1m6 0h1m6 0h1m7 0h1m6 0h1m6 0h1m6 0h1m7 0h1m6 0h1m6 0h1m7 0h1m6 0h1m6 0h1m7 0h1m6 0h1m6 0h1m6 0h1m7 0h1m6 0h1m6 0h1m7 0h1m6 0h1m6 0h1m6 0h1m7 0h1m6 0h1m6 0h1m7 0h1m6 0h1m1 0h2m5 0h1m3 0h2m8 0h2m1 0h2m1 0h4m-507 1h1m5 0h1m1 0h2m5 0h1m5 0h1m1 0h1m5 0h1m5 0h1m1 0h2m5 0h1m5 0h1m1 0h1m5 0h1m5 0h2m1 0h1m5 0h1m5 0h1m1 0h1m5 0h1m5 0h2m1 0h1m5 0h1m5 0h1m1 0h2m5 0h1m5 0h1m1 0h1m5 0h1m5 0h2m1 0h1m5 0h1m5 0h1m1 0h1m5 0h1m5 0h2m1 0h1m5 0h1m5 0h1m1 0h2m5 0h1m5 0h1m1 0h1m5 0h1m5 0h1m1 0h2m5 0h1m5 0h1m1 0h1m5 0h1m5 0h2m1 0h1m5 0h1m5 0h1m1 0h1m5 0h1m5 0h2m1 0h1m5 0h1m5 0h1m1 0h2m5 0h1m5 0h1m1 0h1m5 0h1m5 0h1m1 0h2m5 0h1m5 0h1m1 0h1m5 0h1m5 0h2m1 0h1m5 0h1m5 0h1m1 0h2m5 0h1m5 0h1m1 0h1m5 0h1m5 0h1m1 0h2m5 0h1m5 0h1m1 0h1m5 0h1m5 0h2m1 0h1m5 0h1m5 0h1m1 0h1m5 0h1m5 0h2m1 0h1m5 0h1m5 0h1m1 0h2m5 0h1m5 0h1m4 0h2m3 0h1m2 0h1m11 0h5m-503 1h1m4 0h1m4 0h1m4 0h1m4 0h1m3 0h1m4 0h1m4 0h1m4 0h1m4 0h1m4 0h1m3 0h1m4 0h1m4 0h1m4 0h1m4 0h1m4 0h1m3 0h1m4 0h1m4 0h1m4 0h1m4 0h1m4 0h1m4 0h1m4 0h1m4 0h1m3 0h1m4 0h1m4 0h1m4 0h1m4 0h1m4 0h1m3 0h1m4 0h1m4 0h1m4 0h1m4 0h1m4 0h1m4 0h1m4 0h1m4 0h1m3 0h1m4 0h1m4 0h1m4 0h1m4 0h1m4 0h1m3 0h1m4 0h1m4 0h1m4 0h1m4 0h1m4 0h1m3 0h1m4 0h1m4 0h1m4 0h1m4 0h1m4 0h1m4 0h1m4 0h1m4 0h1m3 0h1m4 0h1m4 0h1m4 0h1m4 0h1m4 0h1m3 0h1m4 0h1m4 0h1m4 0h1m4 0h1m4 0h1m4 0h1m4 0h1m4 0h1m3 0h1m4 0h1m4 0h1m4 0h1m4 0h1m4 0h1m3 0h1m4 0h1m4 0h1m4 0h1m4 0h1m4 0h1m3 0h1m4 0h1m4 0h1m4 0h1m4 0h1m4 0h1m4 0h1m4 0h1m3 0h2m7 0h1m2 0h1m1 0h1m6 0h6m-498 1h1m2 0h2m6 0h1m3 0h1m2 0h2m5 0h2m2 0h1m2 0h2m6 0h1m3 0h1m2 0h2m5 0h2m2 0h1m3 0h1m6 0h2m2 0h1m2 0h2m5 0h2m2 0h1m3 0h1m6 0h2m2 0h1m2 0h2m6 0h1m3 0h1m2 0h2m5 0h2m2 0h1m3 0h1m6 0h2m2 0h1m2 0h2m5 0h2m2 0h1m3 0h1m6 0h2m2 0h1m2 0h2m6 0h1m3 0h1m2 0h2m5 0h2m2 0h1m2 0h2m6 0h1m3 0h1m2 0h2m5 0h2m2 0h1m3 0h1m6 0h2m2 0h1m2 0h2m5 0h2m2 0h1m3 0h1m6 0h2m2 0h1m2 0h2m6 0h1m3 0h1m2 0h2m5 0h2m2 0h1m2 0h2m6 0h1m3 0h1m2 0h2m5 0h2m2 0h1m3 0h1m6 0h2m2 0h1m2 0h2m6 0h1m3 0h1m2 0h2m5 0h2m2 0h1m2 0h2m6 0h1m3 0h1m2 0h2m5 0h2m2 0h1m3 0h1m6 0h2m2 0h1m2 0h2m5 0h2m2 0h1m3 0h1m6 0h2m2 0h1m2 0h2m6 0h1m3 0h1m2 0h1m10 0h4m1 0h6m-492 1h1m1 0h1m9 0h2m1 0h1m1 0h1m9 0h1m1 0h1m1 0h1m9 0h2m1 0h1m1 0h1m9 0h1m1 0h1m1 0h2m9 0h1m1 0h1m1 0h1m9 0h1m1 0h1m1 0h2m9 0h1m1 0h1m1 0h1m9 0h2m1 0h1m1 0h1m9 0h1m1 0h1m1 0h2m9 0h1m1 0h1m1 0h1m9 0h1m1 0h1m1 0h2m9 0h1m1 0h1m1 0h1m9 0h2m1 0h1m1 0h1m9 0h1m1 0h1m1 0h1m9 0h2m1 0h1m1 0h1m9 0h1m1 0h1m1 0h2m9 0h1m1 0h1m1 0h1m9 0h1m1 0h1m1 0h2m9 0h1m1 0h1m1 0h1m9 0h2m1 0h1m1 0h1m9 0h1m1 0h1m1 0h1m9 0h2m1 0h1m1 0h1m9 0h1m1 0h1m1 0h2m9 0h1m1 0h1m1 0h1m9 0h2m1 0h1m1 0h1m9 0h1m1 0h1m1 0h1m9 0h2m1 0h1m1 0h1m9 0h1m1 0h1m1 0h2m9 0h1m1 0h1m1 0h1m9 0h1m1 0h1m1 0h2m9 0h1m1 0h1m1 0h1m9 0h2m1 0h1m1 0h1m9 0h7m-486 1h2m12 0h3m11 0h3m12 0h3m11 0h3m12 0h3m11 0h3m12 0h3m12 0h3m11 0h3m12 0h3m11 0h3m12 0h3m12 0h3m11 0h3m12 0h3m11 0h3m12 0h3m11 0h3m12 0h3m12 0h3m11 0h3m12 0h3m11 0h3m12 0h3m12 0h3m11 0h3m12 0h3m11 0h3m12 0h3m11 0h3m12 0h3m12 0h3m2 0h8m-479 1h471"/>
</g>
</svg>
<!-- bottom group -->
<div class="abs" style="left:1px;top:696px;width:1023px;height:42px;border:1px solid #fff"></div>
<div class="abs" style="left:0px;top:695px;width:1023px;height:42px;border:1px solid #808080"></div>
<div class="t" style="left:6px;top:691px;background:#d4d0c8;padding:0 2px;height:12px">Выбор номера</div>
<div class="t" style="left:8px;top:712px">Шаг №</div>
<div class="abs" style="left:50px;top:708px;width:55px;height:21px;background:#fff;border:1px solid;border-color:#808080 #fff #fff #808080;box-shadow:inset 1px 1px 0 #404040,inset -1px -1px 0 #d4d0c8"></div>
<div class="t" style="left:54px;top:712px">71</div>
<div class="abs raised" style="left:105px;top:708px;width:15px;height:10px"><div class="abs" style="left:5px;top:4px;width:3px;height:1px;background:#000"></div><div class="abs" style="left:6px;top:3px;width:1px;height:1px;background:#000"></div></div>
<div class="abs raised" style="left:105px;top:719px;width:15px;height:10px"><div class="abs" style="left:5px;top:3px;width:3px;height:1px;background:#000"></div><div class="abs" style="left:6px;top:4px;width:1px;height:1px;background:#000"></div></div>
<!-- taskbar -->
<div class="abs" style="left:0;top:738px;width:1024px;height:30px;background:#d4d0c8"></div>
<div class="abs" style="left:0;top:739px;width:1024px;height:1px;background:#fff"></div>
<!-- start -->
<div class="tb" style="left:2px;top:742px;width:51px;height:22px"></div>
<svg class="abs" style="left:4px;top:744px" width="16" height="16" viewBox="-0.5 1.5 14.5 13"><path d="M1.5 3.2C3.3 2 5 2 7 3L6 7.3C4.2 6.3 2.6 6.4 0.6 7.4Z" fill="#f0641c"/><path d="M8 3.3c2 1 3.6 1 5.6 0L12.5 7.6C10.700 8.600 8.900 8.500 7 7.600Z" fill="#74cc1c"/><path d="M0.400 8.400C2.300 7.300 4 7.300 5.800 8.300L4.700 12.600C3 11.600 1.300 11.600 -0.500 12.700Z" fill="#3f70e4"/><path d="M6.800 8.600c1.900 1 3.600 1 5.500 0L11.200 12.900C9.400 13.900 7.700 13.800 5.800 12.900Z" fill="#fccc1c"/></svg>
<div class="t" style="left:22px;top:747px;font-weight:bold;transform-origin:0 0;transform:scaleX(1.08)">Пуск</div>
<div class="abs" style="left:60px;top:744px;width:3px;height:20px;border-left:1px solid #fff;border-top:1px solid #fff;border-right:1px solid #808080;border-bottom:1px solid #808080"></div>
<!-- quick launch -->
<svg class="abs" style="left:70px;top:746px" width="16" height="16" viewBox="0 0 16 16"><rect x="0.500" y="0.500" width="15" height="15" fill="#dfe8f8" stroke="#4a6ec0"/><rect x="2" y="2" width="12" height="12" fill="#fff"/><path d="M2.500 5h2l1.500 5 1.600-5h1.600l1.500 5 1.600-5h1.500l-2.300 7.500h-1.800L8 8l-1.500 4.500H4.700Z" fill="#2a4fb0"/></svg>
<svg class="abs" style="left:93px;top:746px" width="16" height="15" viewBox="0 0 16 15" shape-rendering="crispEdges"><path d="M0 0h14l1 1v13H0Z" fill="#0000c8"/><rect x="3" y="0" width="9" height="5" fill="#0000ff"/><rect x="8" y="1" width="2" height="3" fill="#c8c8ff"/><rect x="2" y="7" width="11" height="7" fill="#fff"/><rect x="2" y="8" width="11" height="2" fill="#e00020"/><rect x="2" y="12" width="11" height="2" fill="#e00020"/></svg>
<svg class="abs" style="left:116px;top:745px" width="17" height="17" viewBox="0 0 17 17"><path d="M13.500 9.500H5.500c.2 1.600 1.300 2.600 2.900 2.600 1.100 0 1.900-.4 2.500-1.200h2.700c-.9 2.300-2.800 3.600-5.300 3.600-3.300 0-5.600-2.300-5.600-5.500S5 3.500 8.300 3.500c3.400 0 5.500 2.500 5.200 6Zm-8-1.800h5.300C10.600 6.300 9.700 5.500 8.300 5.500S5.800 6.300 5.500 7.700Z" fill="#2f8fe8"/><path d="M1.500 14.500C0 12 3 6 8 3c3-1.800 6-2 6.500-.5" stroke="#58b4f4" stroke-width="1.300" fill="none"/></svg>
<svg class="abs" style="left:139px;top:746px" width="16" height="16" viewBox="0 0 16 16"><rect x="0.500" y="1.500" width="13" height="13" rx="2.500" fill="#3d8ae6" stroke="#1a5fc0"/><path d="M9.500 4.200C6.500 3 3.800 5 3.800 8s2.700 5 5.700 3.800" stroke="#fff" stroke-width="2" fill="none"/><rect x="6.500" y="5" width="5" height="5.500" fill="#fff" stroke="#888" stroke-width=".5"/><path d="M7.500 9.500l5-6" stroke="#333" stroke-width="1"/><circle cx="13.300" cy="3.500" r="1.500" fill="#e84a20"/></svg>
<svg class="abs" style="left:162px;top:746px" width="16" height="16" viewBox="0 0 16 16"><rect x="0.750" y="0.750" width="14.500" height="14.500" fill="#fdf2dc" stroke="#f0a030" stroke-width="1.500"/><circle cx="8" cy="8" r="4.500" fill="#fff8e8" stroke="#d89028" stroke-width="1.200"/><path d="M8 5.200V8h2.300" stroke="#c07818" stroke-width="1" fill="none"/></svg>
<svg class="abs" style="left:185px;top:746px" width="16" height="16" viewBox="0 0 16 16"><circle cx="8" cy="8" r="7.500" fill="#9aa8b8"/><path d="M8 .8A7.200 7.200 0 0 1 15.200 8H8Z" fill="#e89030"/><path d="M15.200 8A7.200 7.200 0 0 1 8 15.200V8Z" fill="#58a838"/><path d="M8 15.200A7.200 7.200 0 0 1 .8 8H8Z" fill="#3868c8"/><path d="M.8 8A7.200 7.200 0 0 1 8 .8V8Z" fill="#d04838"/><circle cx="8" cy="8" r="5.200" fill="#2858c8"/><circle cx="8" cy="8" r="4.200" fill="#3a72e0"/><path d="M6.300 5.200L11 8l-4.700 2.800Z" fill="#fff"/></svg>
<svg class="abs" style="left:208px;top:745px" width="17" height="17" viewBox="0 0 17 17"><path d="M0.500 6.500L5.500 1.500l7 3.500-4 4.500Z" fill="#3a7ad8"/><path d="M1.500 7L8 10v5L1.500 12Z" fill="#e8ecf4" stroke="#9aa6b8" stroke-width=".5"/><path d="M8 10l4-4v4.500L8 15Z" fill="#b8c4d8"/><circle cx="12.300" cy="12.500" r="3.300" fill="#28a838" stroke="#fff" stroke-width=".8"/><path d="M11.200 10.800l3 1.700-3 1.700Z" fill="#fff"/></svg>
<svg class="abs" style="left:231px;top:746px" width="16" height="16" viewBox="0 0 16 16"><circle cx="8" cy="8" r="7.600" fill="#c8c8cc"/><circle cx="8" cy="7.300" r="6.400" fill="#d83030"/><path d="M2 10.500a6.400 6.400 0 0 0 12 0Z" fill="#e8e8ea"/><path d="M5 10c-1-2 0-4 1.500-5 0 1.500 1 2 1.500 1 .3-1 0-2-.3-2.800C10 4 11.500 6 11.500 8c0 .8-.3 1.500-.7 2H9.500c.5-.8.400-1.700-.2-2.300C9 8.700 8.300 9 7.800 8.500 7 9 6.800 9.500 7 10Z" fill="#fff"/></svg>
<div class="abs" style="left:274px;top:744px;width:3px;height:20px;border-left:1px solid #fff;border-top:1px solid #fff;border-right:1px solid #808080;border-bottom:1px solid #808080"></div>
<!-- task buttons -->
<div class="tb" style="left:281px;top:742px;width:115px;height:22px"></div>
<svg class="abs" style="left:286px;top:746px" width="16" height="16" viewBox="0 0 16 16"><path d="M2 1h8.500L6.500 12H9v2.500H2V12h2L7.300 3.500H2Z" fill="#e0a820" stroke="#a87810" stroke-width=".6"/><circle cx="11" cy="8.500" r="4" fill="#2890c8"/><path d="M9 7c1-1.500 3-1.500 4 0-1 .5-.5 2-2 2.500C10 9 10 8 9 7Z" fill="#38a848"/></svg>
<div class="t" style="left:305px;top:747px">Delphi 7</div>
<div class="abs" style="left:400px;top:742px;width:115px;height:22px;border:1px solid;border-color:#404040 #fff #fff #404040;box-shadow:inset 1px 1px 0 #808080;background:repeating-conic-gradient(#fff 0 25%,#d4d0c8 0 50%) 0 0/2px 2px"></div>
<svg class="abs" style="left:405px;top:746px" width="17" height="17" viewBox="0 0 17 17"><circle cx="8.500" cy="8.500" r="8" fill="url(#sg)"/><path d="M4.800 12.500V6.800a3.700 3.700 0 0 1 7.400 0V12" fill="none" stroke="#a8420c" stroke-width="1.500"/><path d="M7 12.500V7.500a1.500 1.500 0 0 1 3 0V12" fill="none" stroke="#c8641c" stroke-width="1.300"/><rect x="10.500" y="10" width="3.500" height="2.500" fill="#58b038"/><rect x="12" y="12.500" width="3" height="2.500" fill="#e8d020"/><rect x="8.500" y="11.500" width="2.500" height="2" fill="#d03828"/><rect x="6" y="13" width="3" height="2" fill="#8aa0c8"/></svg>
<div class="t" style="left:425px;top:748px;font-weight:bold">Pressing</div>
<div class="tb" style="left:519px;top:742px;width:116px;height:22px"></div>
<svg class="abs" style="left:523px;top:746px" width="16" height="15" viewBox="0 0 16 15" shape-rendering="crispEdges"><path d="M0 0h14l1 1v13H0Z" fill="#0000c8"/><rect x="3" y="0" width="9" height="5" fill="#0000ff"/><rect x="8" y="1" width="2" height="3" fill="#c8c8ff"/><rect x="2" y="7" width="11" height="7" fill="#fff"/><rect x="2" y="8" width="11" height="2" fill="#e00020"/><rect x="2" y="12" width="11" height="2" fill="#e00020"/></svg>
<div class="t" style="left:543px;top:747px">Total Command...</div>
<div class="tb" style="left:638px;top:742px;width:115px;height:22px"></div>
<svg class="abs" style="left:642px;top:745px" width="16" height="17" viewBox="0 0 16 17"><path d="M4.500 2.500h8l3 3v11h-11Z" fill="#e4ecfa" stroke="#7a94c8"/><path d="M6 8h8M6 10h8M6 12h8M6 14h8" stroke="#a8bce0" stroke-width=".8"/><rect x="0.500" y="0.500" width="9" height="9" fill="#fff" stroke="#2a4fb0"/><path d="M1.800 2.500h1.300l.9 4 1-4h1l1 4 .9-4h1.200l-1.500 5.500H6.500L5.500 4.500l-1 3.500H3.300Z" fill="#2a4fb0"/></svg>
<div class="t" style="left:661px;top:747px">Часть_3 - Micr...</div>
<div class="tb" style="left:757px;top:742px;width:116px;height:22px"></div>
<svg class="abs" style="left:762px;top:745px" width="16" height="17" viewBox="0 0 16 17"><path d="M3 7h10l-1.500 9.500h-7Z" fill="#c8ccd8" stroke="#8890a8" stroke-width=".6"/><path d="M4 8L2 1.500" stroke="#e8a020" stroke-width="1.600"/><path d="M6.500 8L6 .5" stroke="#38a838" stroke-width="1.600"/><path d="M9 8l2-7" stroke="#d83838" stroke-width="1.600"/><path d="M11.500 8l3-5" stroke="#3868d8" stroke-width="1.600"/><path d="M5 10c2 2 4 2 6 0" stroke="#e8a020" stroke-width="1.500" fill="none"/></svg>
<div class="t" style="left:781px;top:747px">Безымянный - ...</div>
<div class="abs" style="left:882px;top:744px;width:3px;height:20px;border-left:1px solid #fff;border-top:1px solid #fff;border-right:1px solid #808080;border-bottom:1px solid #808080"></div>
<!-- tray -->
<div class="abs" style="left:893px;top:746px;width:12px;height:16px;background:#0a246a;overflow:hidden"><div class="t" style="left:1px;top:2px;color:#fff;font-size:11px;letter-spacing:-0.5px">EN</div></div>
<div class="abs" style="left:909px;top:742px;width:113px;height:24px;border:1px solid;border-color:#808080 #fff #fff #808080"></div>
<div class="t" style="left:913px;top:746px;font-weight:bold;font-size:15px;line-height:15px">«</div>
<svg class="abs" style="left:926px;top:746px" width="16" height="16" viewBox="0 0 16 16"><rect x="6" y="0.500" width="9" height="7.500" fill="#3a4a8a" stroke="#20284c"/><rect x="7.500" y="2" width="6" height="4.500" fill="#98a8e0"/><rect x="1" y="5.500" width="9" height="7.500" fill="#3a4a8a" stroke="#20284c"/><rect x="2.500" y="7" width="6" height="4.500" fill="#a8b8e8"/><rect x="3" y="13.500" width="6" height="1.500" fill="#a0a4b0"/></svg>
<svg class="abs" style="left:946px;top:745px" width="15" height="17" viewBox="0 0 15 17"><path d="M7.500 .7C5.500 2.200 3 2.600 1 2.600c0 6 1.400 10.600 6.500 13.600 5.100-3 6.500-7.600 6.500-13.600C12 2.600 9.500 2.200 7.500 .7Z" fill="#d82424" stroke="#8a94b8" stroke-width="1.400"/><path d="M5.300 5.800l4.400 4.400M9.700 5.800l-4.400 4.400" stroke="#fff" stroke-width="1.700"/></svg>
<div class="abs" style="left:963px;top:746px;width:16px;height:16px;background:#7b0a12"><div class="t" style="left:1px;top:2px;color:#fff;font-size:12px;letter-spacing:-0.3px">En</div></div>
<div class="t" style="left:987px;top:747px">11:01</div>

</body></html>
